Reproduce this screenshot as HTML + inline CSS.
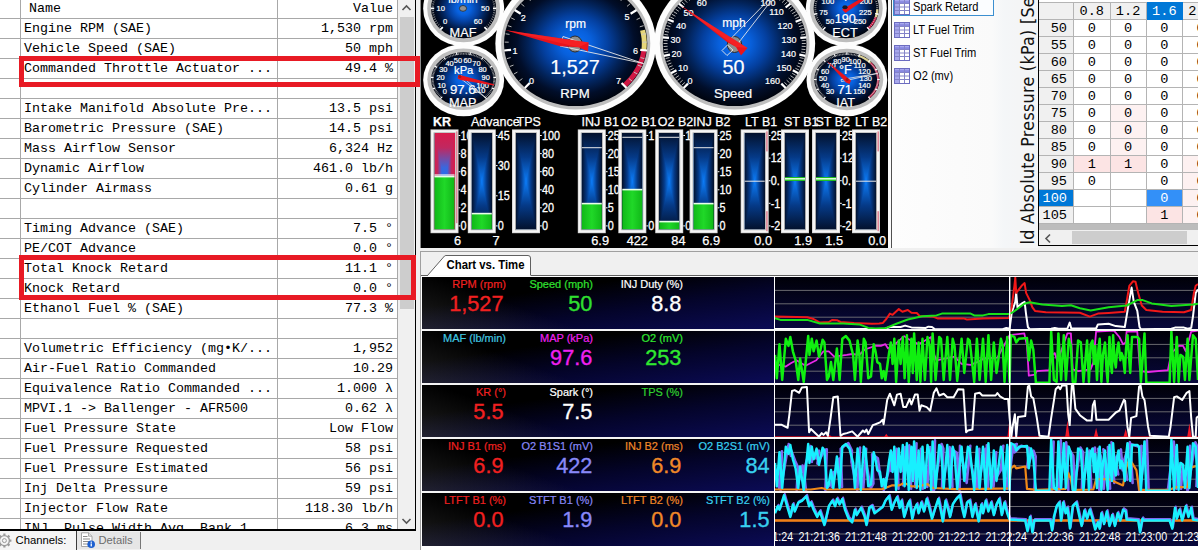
<!DOCTYPE html>
<html><head><meta charset="utf-8"><title>Scanner</title>
<style>
html,body{margin:0;padding:0}body{width:1198px;height:550px;overflow:hidden;position:relative;background:#f0f0f0}

#left{position:absolute;left:0;top:0;width:421px;height:550px;background:#f0f0f0}
.lt{position:absolute;left:0;top:0;width:415px;height:529px;background:#fff;border-right:1px solid #000;border-bottom:2px solid #000;overflow:hidden;font-family:"Liberation Mono",monospace;font-size:13.33px;color:#000}
.lr{position:absolute;left:0;width:397px;height:20px;line-height:20px;border-bottom:1px solid #a8a8a8;box-sizing:border-box;white-space:pre}
.lr .n{position:absolute;left:24px;top:0}
.lr .v{position:absolute;right:4px;top:0}
.vl{position:absolute;top:0;width:1px;height:529px;background:#a8a8a8}
.sb{position:absolute;left:398px;top:0;width:17px;height:529px;background:#f0f0f0}
.sb .th{position:absolute;left:2px;top:17px;width:14px;height:292px;background:#cdcdcd}
.sb .ar{position:absolute;left:0}
.red{position:absolute;box-sizing:border-box;border:5px solid #e81a24}
.btabs{position:absolute;left:0;top:531px;width:421px;height:19px;font-family:"Liberation Sans",sans-serif;line-height:19px}
.tabA{position:absolute;left:0;top:0;width:77px;height:19px;background:#f5f5f5;border-right:1.5px solid #3c3c3c;box-sizing:border-box}
.tabB{position:absolute;left:77px;top:1px;width:64px;height:17px;background:#e6e6e6;border-right:1px solid #777;box-sizing:border-box}
.bt1{position:absolute;left:15.5px;top:-0.5px;color:#000;font-size:11.3px}
.bt2{position:absolute;left:98.5px;top:-0.5px;color:#6d6d6d;font-size:11.2px}

#gp{position:absolute;left:421px;top:0;width:467px;height:248px;background:#000;overflow:hidden;box-shadow:-1px 0 0 #8c8c8c}
#gp svg{display:block}

#midw{position:absolute;left:888px;top:0;width:3px;height:248px;background:#fafafa}
#mid{position:absolute;left:890.5px;top:0;width:127.5px;height:248px;background:linear-gradient(90deg,#fdfdfd 0,#fafafa 100px,#f4f6f8 112px,#f4f5f6 100%);border-left:1.5px solid #505050;box-sizing:border-box;overflow:hidden;font-family:"Liberation Sans",sans-serif;font-size:12px;color:#000}
#mid .sel{position:absolute;left:1px;top:-10px;width:101px;height:26px;border:1px solid #3c8fd0;background:#fbfdff;box-sizing:border-box}
.mi{position:absolute;left:21.5px;height:20px;line-height:20px;white-space:nowrap;transform:scaleX(0.925);transform-origin:0 50%}
#vlab{position:absolute;left:1018px;top:0;width:20px;height:248px;background:#f4f5f6;overflow:hidden}
#vlab span{position:absolute;left:0;top:0;transform-origin:0 0;transform:translate(-0.5px,244.5px) rotate(-90deg);white-space:nowrap;font-family:"DejaVu Sans Condensed","DejaVu Sans",sans-serif;font-size:17.7px;line-height:20px;color:#111;letter-spacing:0.3px}

#rt{position:absolute;left:1038px;top:0;width:160px;height:245px;background:#fff;border-left:1px solid #000;border-bottom:1px solid #000;overflow:hidden;font-family:"Liberation Mono",monospace;font-size:13.6px;color:#000}
#rt div{box-sizing:border-box;position:absolute}
#rt .h{background:#f0f0f0;border-right:1px solid #b4b4b4;border-bottom:1px solid #b4b4b4;border-top:1px solid #b4b4b4;text-align:center}
#rt .h.sel{background:#0078d7;color:#fff;border-color:#0078d7}
#rt .rh{left:0;background:#f0f0f0;border-right:1px solid #b4b4b4;border-bottom:1px solid #b4b4b4;text-align:right;padding-right:6px}
#rt .rh.sel{background:#0078d7;color:#fff}
#rt .c{background:#fff;border-right:1px solid #b4b4b4;border-bottom:1px solid #b4b4b4;text-align:center}
#rt .c.p1{background:#fdf1f1}
#rt .c.p2{background:#fce4e4}
#rt .c.cs{background:#3390f8;color:#fff}
#rt .gs{left:0;top:224px;width:160px;height:6px;z-index:3;background:#bcbcbc}
#rt .hs{left:0;top:230px;width:160px;height:15px;background:#f0f0f0}
#rt .hs .th{left:33px;top:1px;width:115px;height:13px;background:#cdcdcd}

#cv{position:absolute;left:420px;top:250px;width:778px;height:300px;background:#f0f0f0}
#cv:before{content:"";position:absolute;left:0;top:1px;width:1px;height:299px;background:#a0a0a0}
#cv:after{content:"";position:absolute;left:1px;top:26px;width:777px;height:274px;background:#fff}
#ro .rb{position:absolute;left:0;width:352px;background:linear-gradient(20deg,rgba(70,70,70,.45) 0%,rgba(40,40,40,0) 32%),linear-gradient(172deg,#000 0%,#000 30%,#04042a 60%,#0b0b56 100%)}
#ro{position:absolute;left:2px;top:27px;width:352px;height:269px;background:#000;overflow:hidden;font-family:"Liberation Sans",sans-serif;z-index:2;border-left:0}
#ro .rl{position:absolute;font-size:11px;line-height:14px;white-space:nowrap;-webkit-text-stroke:0.2px}
#ro .rv{position:absolute;font-size:21.7px;line-height:28px;white-space:nowrap;-webkit-text-stroke:0.35px}
#ro .rs{position:absolute;left:0;width:352px;height:1.6px;margin-top:0.2px;background:#f4f4f4}
#ch{position:absolute;left:355px;top:27px;z-index:2}
</style></head>
<body>
<div id="left">
<div class="lt">
<div class="lr hd" style="top:0;height:19px;line-height:18px"><span class="n" style="padding-left:5px;top:0">Name</span><span class="v" style="top:0">Value</span></div>
<div class="lr" style="top:19px"><span class="n">Engine RPM (SAE)</span><span class="v">1,530 rpm</span></div>
<div class="lr" style="top:39px"><span class="n">Vehicle Speed (SAE)</span><span class="v">50 mph</span></div>
<div class="lr" style="top:59px"><span class="n">Commanded Throttle Actuator ...</span><span class="v">49.4 %</span></div>
<div class="lr" style="top:79px"><span class="n"></span><span class="v"></span></div>
<div class="lr" style="top:99px"><span class="n">Intake Manifold Absolute Pre...</span><span class="v">13.5 psi</span></div>
<div class="lr" style="top:119px"><span class="n">Barometric Pressure (SAE)</span><span class="v">14.5 psi</span></div>
<div class="lr" style="top:139px"><span class="n">Mass Airflow Sensor</span><span class="v">6,324 Hz</span></div>
<div class="lr" style="top:159px"><span class="n">Dynamic Airflow</span><span class="v">461.0 lb/h</span></div>
<div class="lr" style="top:179px"><span class="n">Cylinder Airmass</span><span class="v">0.61 g</span></div>
<div class="lr" style="top:199px"><span class="n"></span><span class="v"></span></div>
<div class="lr" style="top:219px"><span class="n">Timing Advance (SAE)</span><span class="v">7.5 °</span></div>
<div class="lr" style="top:239px"><span class="n">PE/COT Advance</span><span class="v">0.0 °</span></div>
<div class="lr" style="top:259px"><span class="n">Total Knock Retard</span><span class="v">11.1 °</span></div>
<div class="lr" style="top:279px"><span class="n">Knock Retard</span><span class="v">0.0 °</span></div>
<div class="lr" style="top:299px"><span class="n">Ethanol Fuel % (SAE)</span><span class="v">77.3 %</span></div>
<div class="lr" style="top:319px"><span class="n"></span><span class="v"></span></div>
<div class="lr" style="top:339px"><span class="n">Volumetric Efficiency (mg•K/...</span><span class="v">1,952</span></div>
<div class="lr" style="top:359px"><span class="n">Air-Fuel Ratio Commanded</span><span class="v">10.29</span></div>
<div class="lr" style="top:379px"><span class="n">Equivalence Ratio Commanded ...</span><span class="v">1.000 λ</span></div>
<div class="lr" style="top:399px"><span class="n">MPVI.1 -> Ballenger - AFR500</span><span class="v">0.62 λ</span></div>
<div class="lr" style="top:419px"><span class="n">Fuel Pressure State</span><span class="v">Low Flow</span></div>
<div class="lr" style="top:439px"><span class="n">Fuel Pressure Requested</span><span class="v">58 psi</span></div>
<div class="lr" style="top:459px"><span class="n">Fuel Pressure Estimated</span><span class="v">56 psi</span></div>
<div class="lr" style="top:479px"><span class="n">Inj Delta Pressure</span><span class="v">59 psi</span></div>
<div class="lr" style="top:499px"><span class="n">Injector Flow Rate</span><span class="v">118.30 lb/h</span></div>
<div class="lr" style="top:519px"><span class="n">INJ. Pulse Width Avg. Bank 1</span><span class="v">6.3 ms</span></div>
<div class="vl" style="left:20px"></div><div class="vl" style="left:277px"></div><div class="vl" style="left:397px"></div>
<div class="sb"><div class="th"></div><svg class="ar" style="top:3px" width="17" height="10" viewBox="0 0 17 10"><path d="M4.5 7 L8.5 3 L12.5 7" fill="none" stroke="#555" stroke-width="1.6"/></svg><svg class="ar" style="top:516px" width="17" height="10" viewBox="0 0 17 10"><path d="M4.5 3 L8.5 7 L12.5 3" fill="none" stroke="#555" stroke-width="1.6"/></svg></div>
</div>
<div class="red" style="left:19px;top:56px;width:401px;height:31px"></div>
<div class="red" style="left:19px;top:255px;width:397px;height:45px"></div>
<div class="btabs"><div class="tabA"></div><div class="tabB"></div><svg style="position:absolute;left:0;top:1px" width="14" height="18" viewBox="0 0 14 18"><g transform="translate(4.4,8.6)" fill="none" stroke="#9a9a9a"><circle r="5" stroke-width="1.3"/><circle r="2" stroke-width="1"/><path d="M0 -5V-7M0 5V7M5 0H7M-5 0H-7M3.5 -3.5L5 -5M3.5 3.5L5 5M-3.5 3.5L-5 5M-3.5 -3.5L-5 -5" stroke-width="2.2"/></g></svg><svg style="position:absolute;left:80px;top:1px" width="17" height="17" viewBox="0 0 17 17"><path d="M1.5 0.8H8.5L12 4.2V14.5H1.5Z" fill="#fff" stroke="#9c9c9c" stroke-width="0.9"/><path d="M8.5 0.8V4.2H12" fill="#e4e4e4" stroke="#9c9c9c" stroke-width="0.8"/><path d="M3 4.5H7.5M3 7H10M3 9.5H10M3 12H8" stroke="#8a8a8a" stroke-width="1"/><circle cx="11.2" cy="12.2" r="3.8" fill="#1c5fd0"/><rect x="10.6" y="11.4" width="1.3" height="3" fill="#fff"/><rect x="10.6" y="9.6" width="1.3" height="1.2" fill="#fff"/></svg><span class="bt1">Channels:</span><span class="bt2">Details</span></div>
</div>
<div id="gp"><svg width="468" height="248" viewBox="421 0 468 248">
<defs>
<radialGradient id="gf" cx="0.5" cy="0.5" r="0.5">
<stop offset="0" stop-color="#0a70f8"/><stop offset="0.22" stop-color="#0860dc"/><stop offset="0.45" stop-color="#0440a0"/><stop offset="0.65" stop-color="#02245c"/><stop offset="0.82" stop-color="#010e2a"/><stop offset="1" stop-color="#00040e"/>
</radialGradient>
</defs>
<ellipse cx="463.65" cy="8.6" rx="40.5" ry="37.9" fill="#fdfdfd"/>
<ellipse cx="463.6" cy="8.4" rx="36.4" ry="33.8" fill="#bebebe"/>
<ellipse cx="463.6" cy="8.4" rx="32.6" ry="29.8" fill="url(#gf)"/>
<path d="M441.0 29.0L442.5 27.6M439.3 27.3L440.9 26.0M437.8 25.5L439.4 24.3M436.4 23.6L438.1 22.6M435.2 21.6L437.0 20.7M434.1 19.5L436.0 18.8M433.3 17.4L435.2 16.8M432.6 15.2L434.5 14.7M432.1 13.0L434.1 12.6M431.8 10.7L433.8 10.5M431.7 8.4L433.7 8.4M431.8 6.1L433.8 6.3M432.1 3.8L434.1 4.2M432.6 1.6L434.5 2.1M433.3 -0.6L435.2 0.0M434.1 -2.7L436.0 -2.0M435.2 -4.8L437.0 -3.9M436.4 -6.8L438.1 -5.8M437.8 -8.7L439.4 -7.5M439.3 -10.5L440.9 -9.2M441.0 -12.2L442.5 -10.8M442.9 -13.7L444.2 -12.2M444.8 -15.1L446.0 -13.5M446.9 -16.4L448.0 -14.7M449.1 -17.5L450.0 -15.7M451.4 -18.5L452.2 -16.6M453.7 -19.3L454.4 -17.4M456.2 -19.9L456.6 -18.0M458.6 -20.3L458.9 -18.4M461.1 -20.6L461.3 -18.6M463.6 -20.7L463.6 -18.7M466.1 -20.6L465.9 -18.6M468.6 -20.3L468.3 -18.4M471.0 -19.9L470.6 -18.0M473.5 -19.3L472.8 -17.4M475.8 -18.5L475.0 -16.6M478.1 -17.5L477.2 -15.7M480.3 -16.4L479.2 -14.7M482.4 -15.1L481.2 -13.5M484.3 -13.7L483.0 -12.2M486.2 -12.2L484.7 -10.8M487.9 -10.5L486.3 -9.2M489.4 -8.7L487.8 -7.5M490.8 -6.8L489.1 -5.8M492.0 -4.8L490.2 -3.9M493.1 -2.7L491.2 -2.0M493.9 -0.6L492.0 0.0M494.6 1.6L492.7 2.1M495.1 3.8L493.1 4.2M495.4 6.1L493.4 6.3M495.5 8.4L493.5 8.4M495.4 10.7L493.4 10.5M495.1 13.0L493.1 12.6M494.6 15.2L492.7 14.7M493.9 17.4L492.0 16.8M493.1 19.5L491.2 18.8M492.0 21.6L490.2 20.7M490.8 23.6L489.1 22.6M489.4 25.5L487.8 24.3M487.9 27.3L486.3 26.0M486.2 29.0L484.7 27.6" stroke="#c8c8c8" stroke-width="0.7" fill="none"/>
<path d="M440.3 29.7L442.8 27.2M430.7 8.4L434.2 8.4M440.3 -12.9L442.8 -10.4M463.6 -21.7L463.6 -18.2M486.9 -12.9L484.4 -10.4M496.5 8.4L493.0 8.4M486.9 29.7L484.4 27.2" stroke="#fff" stroke-width="1.8" fill="none"/>
<g font-family="Liberation Sans, sans-serif" font-size="7.6" fill="#fff" stroke="#fff" stroke-width="0.2" text-anchor="middle">
<text x="445.0" y="23.6">0</text>
<text x="440.8" y="11.1">10</text>
<text x="485.2" y="11.1">50</text>
<text x="478.0" y="23.6">60</text>
</g>
<text x="463" y="3.2" font-family="Liberation Sans, sans-serif" font-size="11" fill="#fff" stroke="#fff" stroke-width="0.2" text-anchor="middle">lb/min</text>
<text x="463" y="36.8" font-family="Liberation Sans, sans-serif" font-size="12.7" fill="#fff" stroke="#fff" stroke-width="0.2" text-anchor="middle">MAF</text>
<ellipse cx="463" cy="8.4" rx="3.6" ry="2.9" fill="#909090" stroke="#202830" stroke-width="0.8"/>
<ellipse cx="463.65" cy="80.1" rx="40.5" ry="36.1" fill="#fdfdfd"/>
<ellipse cx="463.45" cy="79.3" rx="36.15" ry="30.8" fill="#bebebe"/>
<ellipse cx="463.45" cy="79.3" rx="32.35" ry="27.1" fill="url(#gf)"/>
<path d="M441.1 98.0L442.3 96.7M439.9 96.9L441.2 95.7M438.8 95.9L440.2 94.7M437.8 94.7L439.2 93.7M436.8 93.6L438.3 92.6M435.9 92.4L437.5 91.5M435.1 91.1L436.8 90.3M434.4 89.8L436.1 89.1M433.8 88.5L435.5 87.9M433.2 87.2L435.0 86.7M432.8 85.8L434.5 85.4M432.4 84.5L434.2 84.1M432.1 83.1L433.9 82.8M431.9 81.7L433.7 81.5M431.8 80.2L433.6 80.2M431.8 78.8L433.6 78.9M431.9 77.4L433.7 77.5M432.0 76.0L433.8 76.2M432.3 74.6L434.1 74.9M432.6 73.2L434.4 73.6M433.1 71.9L434.8 72.4M433.6 70.5L435.3 71.1M434.2 69.2L435.9 69.9M434.9 67.9L436.5 68.7M435.7 66.6L437.3 67.5M436.5 65.4L438.1 66.4M437.5 64.2L438.9 65.3M438.5 63.1L439.9 64.2M439.5 62.0L440.9 63.2M440.7 61.0L442.0 62.2M441.9 60.0L443.1 61.3M443.2 59.0L444.3 60.4M444.5 58.2L445.6 59.6M445.9 57.3L446.9 58.8M447.3 56.6L448.2 58.1M448.8 55.9L449.6 57.5M450.3 55.3L451.0 56.9M451.9 54.7L452.5 56.4M453.5 54.3L454.0 56.0M455.1 53.8L455.6 55.6M456.7 53.5L457.1 55.3M458.4 53.2L458.7 55.0M460.1 53.1L460.3 54.8M461.8 52.9L461.9 54.7M463.4 52.9L463.4 54.7M465.1 52.9L465.0 54.7M466.8 53.1L466.6 54.8M468.5 53.2L468.2 55.0M470.2 53.5L469.8 55.3M471.8 53.8L471.3 55.6M473.4 54.3L472.9 56.0M475.0 54.7L474.4 56.4M476.6 55.3L475.9 56.9M478.1 55.9L477.3 57.5M479.6 56.6L478.7 58.1M481.0 57.3L480.0 58.8M482.4 58.2L481.3 59.6M483.7 59.0L482.6 60.4M485.0 60.0L483.8 61.3M486.2 61.0L484.9 62.2M487.4 62.0L486.0 63.2M488.4 63.1L487.0 64.2M489.4 64.2L488.0 65.3M490.4 65.4L488.8 66.4M491.2 66.6L489.6 67.5M492.0 67.9L490.4 68.7M492.7 69.2L491.0 69.9M493.3 70.5L491.6 71.1M493.8 71.9L492.1 72.4M494.3 73.2L492.5 73.6M494.6 74.6L492.8 74.9M494.9 76.0L493.1 76.2M495.0 77.4L493.2 77.5M495.1 78.8L493.3 78.9M495.1 80.2L493.3 80.2M495.0 81.7L493.2 81.5M494.8 83.1L493.0 82.8M494.5 84.5L492.7 84.1M494.1 85.8L492.4 85.4M493.7 87.2L491.9 86.7M493.1 88.5L491.4 87.9M492.5 89.8L490.8 89.1M491.8 91.1L490.1 90.3M491.0 92.4L489.4 91.5M490.1 93.6L488.6 92.6M489.1 94.7L487.7 93.7M488.1 95.9L486.7 94.7M487.0 96.9L485.7 95.7M485.8 98.0L484.6 96.7" stroke="#c8c8c8" stroke-width="0.7" fill="none"/>
<path d="M440.4 98.7L442.1 96.9M432.9 88.9L435.2 88.0M430.9 77.3L433.4 77.5M434.8 66.2L437.0 67.4M443.9 57.4L445.4 59.4M456.5 52.5L457.0 55.0M470.4 52.5L469.9 55.0M483.0 57.4L481.5 59.4M492.1 66.2L489.9 67.4M496.0 77.3L493.5 77.5M494.0 88.9L491.7 88.0M486.5 98.7L484.8 96.9" stroke="#fff" stroke-width="1.2" fill="none"/>
<g font-family="Liberation Sans, sans-serif" font-size="7.4" fill="#fff" stroke="#fff" stroke-width="0.2" text-anchor="middle">
<text x="444.9" y="93.7">0</text>
<text x="441.5" y="88.1">10</text>
<text x="440.6" y="80.1">20</text>
<text x="443.3" y="72.1">30</text>
<text x="449.5" y="65.9">40</text>
<text x="457.9" y="63.0">50</text>
<text x="467.5" y="63.0">60</text>
<text x="476.4" y="65.9">70</text>
<text x="482.6" y="72.1">80</text>
<text x="485.7" y="80.1">90</text>
<text x="482.6" y="87.5">100</text>
<text x="479.5" y="93.1">110</text>
</g>
<text x="463.7" y="73.6" font-family="Liberation Sans, sans-serif" font-size="11.2" fill="#fff" stroke="#fff" stroke-width="0.2" text-anchor="middle">kPa</text>
<text x="462.8" y="94.1" font-family="Liberation Sans, sans-serif" font-size="13.2" fill="#fff" stroke="#fff" stroke-width="0.2" text-anchor="middle">97.6</text>
<text x="462.7" y="106.8" font-family="Liberation Sans, sans-serif" font-size="12.7" fill="#fff" stroke="#fff" stroke-width="0.2" text-anchor="middle">MAP</text>
<polygon points="461,75.5 486.6,98.6 460,78" fill="none" stroke="#e8e8e8" stroke-width="0.8"/><polygon points="458.3,75 461,75.2 494,84.2 494,85.5 460.5,80 457.6,78.6" fill="#e8141c"/><circle cx="459.8" cy="76.6" r="1.6" fill="#a01818"/>
<ellipse cx="575.65" cy="43.5" rx="80.3" ry="71.7" fill="#fdfdfd"/>
<ellipse cx="575.65" cy="43.5" rx="74.65" ry="65.9" fill="#bebebe"/>
<ellipse cx="575.65" cy="43.5" rx="71.65" ry="62.6" fill="url(#gf)"/>
<polygon fill="#e6d67a" points="645.0,29.7 646.0,34.0 646.5,38.3 646.8,42.6 646.7,47.0 646.2,51.3 641.3,50.7 641.7,46.7 641.8,42.7 641.6,38.7 641.0,34.7 640.1,30.8"/>
<polygon fill="#d01844" points="646.2,51.3 645.4,55.8 644.2,60.2 642.6,64.5 640.6,68.8 638.4,72.8 635.7,76.8 632.8,80.5 629.5,84.1 626.0,87.4 622.4,83.9 625.7,80.8 628.8,77.5 631.5,74.1 633.9,70.5 636.1,66.7 637.9,62.8 639.4,58.9 640.5,54.8 641.3,50.7"/>
<path d="M525.5 87.3L528.3 84.4M519.2 81.0L522.4 78.6M513.9 74.0L517.4 72.1M509.8 66.5L513.5 65.1M506.9 58.6L510.7 57.6M505.1 50.4L509.1 50.0M504.7 42.1L508.7 42.2M505.6 33.8L509.5 34.4M507.7 25.7L511.5 26.8M511.1 17.9L514.7 19.6M515.6 10.6L519.0 12.7M521.2 3.8L524.3 6.4M527.8 -2.2L530.5 0.8M535.2 -7.4L537.5 -4.1M543.4 -11.7L545.3 -8.1M552.2 -14.9L553.5 -11.2M561.4 -17.1L562.2 -13.2M570.9 -18.3L571.1 -14.3M580.4 -18.3L580.2 -14.3M589.9 -17.1L589.1 -13.2M599.1 -14.9L597.8 -11.2M607.9 -11.7L606.0 -8.1M616.1 -7.4L613.8 -4.1M623.5 -2.2L620.8 0.8M630.1 3.8L627.0 6.4M635.7 10.6L632.3 12.7M640.2 17.9L636.6 19.6M643.6 25.7L639.8 26.8M645.7 33.8L641.8 34.4M646.6 42.1L642.6 42.2M646.2 50.4L642.2 50.0M644.4 58.6L640.6 57.6M641.5 66.5L637.8 65.1M637.4 74.0L633.9 72.1M632.1 81.0L628.9 78.6M625.8 87.3L623.0 84.4" stroke="#c8c8c8" stroke-width="0.9" fill="none"/>
<path d="M524.8 88.0L529.7 83.0M504.2 50.5L511.1 49.8M514.7 10.0L520.7 13.8M551.9 -15.9L554.2 -9.3M599.4 -15.9L597.1 -9.3M636.6 10.0L630.6 13.8M647.1 50.5L640.2 49.8M626.5 88.0L621.6 83.0" stroke="#fff" stroke-width="2.2" fill="none"/>
<g font-family="Liberation Sans, sans-serif" font-size="9" fill="#fff" stroke="#fff" stroke-width="0.2" text-anchor="middle">
<text x="531.5" y="84.0">0</text>
<text x="515.1" y="53.9">1</text>
<text x="523.2" y="20.7">2</text>
<text x="555.5" y="-1.9">3</text>
<text x="595.8" y="-1.9">4</text>
<text x="627.1" y="20.4">5</text>
<text x="635.6" y="53.9">6</text>
<text x="618.4" y="84.0">7</text>
</g>
<text x="575.6" y="28.0" font-family="Liberation Sans, sans-serif" font-size="12" fill="#fff" stroke="#fff" stroke-width="0.2" text-anchor="middle">rpm</text>
<text x="575" y="73.9" font-family="Liberation Sans, sans-serif" font-size="19.8" fill="#fff" stroke="#fff" stroke-width="0.2" text-anchor="middle">1,527</text>
<text x="575" y="98.4" font-family="Liberation Sans, sans-serif" font-size="13.2" fill="#fff" stroke="#fff" stroke-width="0.2" text-anchor="middle">RPM</text>
<ellipse cx="575" cy="44" rx="7.2" ry="8" fill="#8e8e8e" stroke="#2a2a2a" stroke-width="1"/><polygon points="563,36.5 643.5,63.5 560,46" fill="none" stroke="#e8e8e8" stroke-width="0.9"/><polygon points="505.5,30.2 588.7,42.6 588,51.6 578.5,47.3 560,46.2" fill="#e8141c"/><polygon points="505.5,30.2 588.7,42.6 578.5,47.3" fill="#ff2a2a" opacity="0.55"/>
<ellipse cx="734.65" cy="43.5" rx="80.5" ry="71.7" fill="#fdfdfd"/>
<ellipse cx="734.65" cy="43.5" rx="74.85" ry="65.9" fill="#bebebe"/>
<ellipse cx="734.65" cy="43.5" rx="71.85" ry="62.6" fill="url(#gf)"/>
<path d="M684.3 87.3L687.2 84.4M681.9 85.1L684.9 82.4M679.7 82.8L682.7 80.2M677.5 80.4L680.7 78.0M675.5 77.9L678.8 75.7M673.6 75.3L677.1 73.3M671.9 72.7L675.4 70.8M670.3 70.0L673.9 68.3M668.9 67.2L672.6 65.7M667.7 64.4L671.4 63.0M666.6 61.5L670.4 60.3M665.6 58.5L669.5 57.6M664.9 55.6L668.8 54.8M664.3 52.6L668.2 52.0M663.8 49.6L667.8 49.2M663.6 46.5L667.6 46.3M663.5 43.5L667.5 43.5M663.6 40.5L667.6 40.7M663.8 37.4L667.8 37.8M664.3 34.4L668.2 35.0M664.9 31.4L668.8 32.2M665.6 28.5L669.5 29.4M666.6 25.5L670.4 26.7M667.7 22.6L671.4 24.0M668.9 19.8L672.6 21.3M670.3 17.0L673.9 18.7M671.9 14.3L675.4 16.2M673.6 11.7L677.1 13.7M675.5 9.1L678.8 11.3M677.5 6.6L680.7 9.0M679.7 4.2L682.7 6.8M681.9 1.9L684.9 4.6M684.3 -0.3L687.2 2.6M686.9 -2.4L689.6 0.6M689.5 -4.3L692.1 -1.3M692.3 -6.2L694.6 -3.0M695.1 -8.0L697.3 -4.6M698.1 -9.6L700.1 -6.2M701.1 -11.1L703.0 -7.6M704.2 -12.5L705.9 -8.8M707.4 -13.7L709.0 -10.0M710.7 -14.8L712.0 -11.0M714.0 -15.7L715.2 -11.9M717.4 -16.5L718.3 -12.7M720.8 -17.2L721.5 -13.3M724.2 -17.7L724.8 -13.8M727.7 -18.1L728.1 -14.1M731.2 -18.3L731.4 -14.3M734.6 -18.4L734.6 -14.4M738.1 -18.3L737.9 -14.3M741.6 -18.1L741.2 -14.1M745.1 -17.7L744.5 -13.8M748.5 -17.2L747.8 -13.3M751.9 -16.5L751.0 -12.7M755.3 -15.7L754.1 -11.9M758.6 -14.8L757.3 -11.0M761.9 -13.7L760.3 -10.0M765.1 -12.5L763.4 -8.8M768.2 -11.1L766.3 -7.6M771.2 -9.6L769.2 -6.2M774.2 -8.0L772.0 -4.6M777.0 -6.2L774.7 -3.0M779.8 -4.3L777.2 -1.3M782.4 -2.4L779.7 0.6M785.0 -0.3L782.1 2.6M787.4 1.9L784.4 4.6M789.6 4.2L786.6 6.8M791.8 6.6L788.6 9.0M793.8 9.1L790.5 11.3M795.7 11.7L792.2 13.7M797.4 14.3L793.9 16.2M799.0 17.0L795.4 18.7M800.4 19.8L796.7 21.3M801.6 22.6L797.9 24.0M802.7 25.5L798.9 26.7M803.7 28.5L799.8 29.4M804.4 31.4L800.5 32.2M805.0 34.4L801.1 35.0M805.5 37.4L801.5 37.8M805.7 40.5L801.7 40.7M805.8 43.5L801.8 43.5M805.7 46.5L801.7 46.3M805.5 49.6L801.5 49.2M805.0 52.6L801.1 52.0M804.4 55.6L800.5 54.8M803.7 58.5L799.8 57.6M802.7 61.5L798.9 60.3M801.6 64.4L797.9 63.0M800.4 67.2L796.7 65.7M799.0 70.0L795.4 68.3M797.4 72.7L793.9 70.8M795.7 75.3L792.2 73.3M793.8 77.9L790.5 75.7M791.8 80.4L788.6 78.0M789.6 82.8L786.6 80.2M787.4 85.1L784.4 82.4M785.0 87.3L782.1 84.4" stroke="#c8c8c8" stroke-width="0.9" fill="none"/>
<path d="M683.6 88.0L688.0 83.6M671.0 73.2L676.5 70.2M663.9 55.8L670.0 54.6M662.8 37.3L669.0 37.9M668.0 19.4L673.7 21.8M678.9 3.6L683.7 7.5M694.6 -8.8L698.0 -3.6M713.7 -16.7L715.5 -10.8M734.6 -19.4L734.6 -13.2M755.6 -16.7L753.8 -10.8M774.7 -8.8L771.3 -3.6M790.4 3.6L785.6 7.5M801.3 19.4L795.6 21.8M806.5 37.3L800.3 37.9M805.4 55.8L799.3 54.6M798.3 73.2L792.8 70.2M785.7 88.0L781.3 83.6" stroke="#fff" stroke-width="2.2" fill="none"/>
<g font-family="Liberation Sans, sans-serif" font-size="9" fill="#fff" stroke="#fff" stroke-width="0.2" text-anchor="middle">
<text x="690.0" y="84.0">0</text>
<text x="683.0" y="71.2">10</text>
<text x="676.5" y="57.2">20</text>
<text x="675.6" y="43.2">30</text>
<text x="681.0" y="28.7">40</text>
<text x="688.5" y="16.2">50</text>
<text x="701.8" y="5.8">60</text>
<text x="717.2" y="-2.1">70</text>
<text x="734.6" y="-4.3">80</text>
<text x="752.1" y="-2.1">90</text>
<text x="768.0" y="5.8">100</text>
<text x="776.5" y="15.2">110</text>
<text x="785.0" y="28.7">120</text>
<text x="789.0" y="43.2">130</text>
<text x="788.5" y="57.2">140</text>
<text x="784.0" y="71.2">150</text>
<text x="772.5" y="84.0">160</text>
</g>
<text x="734" y="27.3" font-family="Liberation Sans, sans-serif" font-size="12" fill="#fff" stroke="#fff" stroke-width="0.2" text-anchor="middle">mph</text>
<text x="733.5" y="73.9" font-family="Liberation Sans, sans-serif" font-size="19.8" fill="#fff" stroke="#fff" stroke-width="0.2" text-anchor="middle">50</text>
<text x="733" y="98.4" font-family="Liberation Sans, sans-serif" font-size="13.2" fill="#fff" stroke="#fff" stroke-width="0.2" text-anchor="middle">Speed</text>
<ellipse cx="734.5" cy="44.5" rx="7.2" ry="8" fill="#8e8e8e" stroke="#2a2a2a" stroke-width="1"/><polygon points="729,40.5 768,0.5 771,1 736,46" fill="none" stroke="#e8e8e8" stroke-width="0.9"/><polygon points="722,50.5 727.5,45 733,50 727,55.5" fill="none" stroke="#e8e8e8" stroke-width="0.9"/><polygon points="680.5,5.6 747.5,48 741,55.5 736,47 727,42" fill="#e8141c"/><polygon points="680.5,5.6 747.5,48 736,47" fill="#ff2a2a" opacity="0.55"/>
<ellipse cx="846.3" cy="8.6" rx="40.5" ry="37.9" fill="#fdfdfd"/>
<ellipse cx="846.25" cy="8.4" rx="36.449999999999996" ry="33.8" fill="#bebebe"/>
<ellipse cx="846.25" cy="8.4" rx="32.65" ry="29.8" fill="url(#gf)"/>
<polygon fill="#e6d67a" points="878.4,9.3 878.2,11.4 877.9,13.4 877.5,15.5 876.8,17.5 874.7,16.8 875.3,14.9 875.8,13.1 876.0,11.2 876.2,9.3"/>
<polygon fill="#d01844" points="876.8,17.5 876.1,19.3 875.2,21.1 874.2,22.9 873.1,24.5 871.8,26.1 870.5,27.7 869.0,29.1 867.4,27.6 868.8,26.2 870.1,24.8 871.2,23.3 872.3,21.8 873.2,20.2 874.0,18.5 874.7,16.8"/>
<path d="M823.7 29.0L825.1 27.6M822.1 27.4L823.6 26.1M820.6 25.7L822.2 24.5M819.3 24.0L820.9 22.9M818.1 22.1L819.8 21.2M817.0 20.2L818.9 19.4M816.2 18.2L818.1 17.5M815.5 16.2L817.4 15.6M814.9 14.1L816.9 13.7M814.5 12.0L816.5 11.7M814.3 9.8L816.3 9.7M814.3 7.7L816.3 7.7M814.5 5.5L816.4 5.7M814.8 3.4L816.7 3.8M815.3 1.3L817.2 1.8M815.9 -0.7L817.8 -0.1M816.7 -2.7L818.6 -2.0M817.7 -4.7L819.5 -3.8M818.8 -6.6L820.6 -5.5M820.1 -8.4L821.8 -7.2M821.6 -10.1L823.1 -8.8M823.1 -11.7L824.6 -10.3M824.8 -13.2L826.1 -11.7M826.6 -14.5L827.8 -13.0M828.5 -15.8L829.6 -14.1M830.5 -16.9L831.5 -15.2M832.6 -17.9L833.4 -16.1M834.8 -18.8L835.5 -16.9M837.0 -19.4L837.6 -17.5M839.2 -20.0L839.7 -18.0M841.6 -20.4L841.9 -18.4M843.9 -20.6L844.0 -18.6M846.2 -20.7L846.2 -18.7M848.6 -20.6L848.5 -18.6M850.9 -20.4L850.6 -18.4M853.3 -20.0L852.8 -18.0M855.5 -19.4L854.9 -17.5M857.7 -18.8L857.0 -16.9M859.9 -17.9L859.1 -16.1M862.0 -16.9L861.0 -15.2M864.0 -15.8L862.9 -14.1M865.9 -14.5L864.7 -13.0M867.7 -13.2L866.4 -11.7M869.4 -11.7L867.9 -10.3M870.9 -10.1L869.4 -8.8M872.4 -8.4L870.7 -7.2M873.7 -6.6L871.9 -5.5M874.8 -4.7L873.0 -3.8M875.8 -2.7L873.9 -2.0M876.6 -0.7L874.7 -0.1M877.2 1.3L875.3 1.8M877.7 3.4L875.8 3.8M878.0 5.5L876.1 5.7M878.2 7.7L876.2 7.7M878.2 9.8L876.2 9.7M878.0 12.0L876.0 11.7M877.6 14.1L875.6 13.7M877.0 16.2L875.1 15.6M876.3 18.2L874.4 17.5M875.5 20.2L873.6 19.4M874.4 22.1L872.7 21.2M873.2 24.0L871.6 22.9M871.9 25.7L870.3 24.5M870.4 27.4L868.9 26.1M868.8 29.0L867.4 27.6" stroke="#c8c8c8" stroke-width="0.7" fill="none"/>
<path d="M823.0 29.7L825.4 27.2M813.9 14.3L817.4 13.6M815.8 -3.1L819.0 -1.8M827.9 -16.6L829.9 -13.7M846.2 -21.7L846.2 -18.2M864.6 -16.6L862.6 -13.7M876.7 -3.1L873.5 -1.8M878.6 14.3L875.1 13.6M869.5 29.7L867.1 27.2" stroke="#fff" stroke-width="1.4" fill="none"/>
<g font-family="Liberation Sans, sans-serif" font-size="7.6" fill="#fff" stroke="#fff" stroke-width="0.2" text-anchor="middle">
<text x="830.0" y="23.6">50</text>
<text x="823.4" y="15.2">75</text>
<text x="827.8" y="4.4">100</text>
<text x="866.0" y="4.4">200</text>
<text x="865.3" y="15.2">225</text>
<text x="860.0" y="23.6">250</text>
</g>
<text x="845.5" y="1.0" font-family="Liberation Sans, sans-serif" font-size="11" fill="#fff" stroke="#fff" stroke-width="0.2" text-anchor="middle">°F</text>
<text x="845.2" y="23.4" font-family="Liberation Sans, sans-serif" font-size="12.6" fill="#fff" stroke="#fff" stroke-width="0.2" text-anchor="middle">190</text>
<text x="845" y="36.8" font-family="Liberation Sans, sans-serif" font-size="12.7" fill="#fff" stroke="#fff" stroke-width="0.2" text-anchor="middle">ECT</text>
<polygon points="842,9.5 861,-1.5 864.5,-0.5 845.5,13" fill="#e8141c"/><ellipse cx="845" cy="7.2" rx="2.6" ry="2" fill="#181c28"/>
<ellipse cx="846.9" cy="80.1" rx="40.4" ry="36.1" fill="#fdfdfd"/>
<ellipse cx="846.9" cy="79.5" rx="36.4" ry="30.7" fill="#bebebe"/>
<ellipse cx="846.9" cy="79.5" rx="32.6" ry="27" fill="url(#gf)"/>
<polygon fill="#e6d67a" points="859.2,55.0 861.2,55.8 863.1,56.6 864.9,57.5 866.6,58.6 868.3,59.7 869.9,61.0 871.3,62.3 869.8,63.6 868.4,62.4 867.0,61.2 865.4,60.2 863.8,59.2 862.0,58.3 860.3,57.5 858.4,56.9"/>
<polygon fill="#d01844" points="871.3,62.3 872.8,63.8 874.1,65.5 875.3,67.2 876.4,69.0 877.2,70.8 877.9,72.7 878.5,74.6 878.8,76.6 879.0,78.6 879.0,80.5 878.8,82.5 878.4,84.5 877.9,86.4 877.2,88.3 876.3,90.1 875.3,91.9 874.1,93.6 872.7,95.2 871.2,96.8 869.6,98.2 868.2,96.8 869.7,95.5 871.1,94.1 872.4,92.5 873.5,91.0 874.5,89.3 875.3,87.6 876.0,85.9 876.5,84.1 876.8,82.3 877.0,80.5 877.0,78.6 876.8,76.8 876.5,75.0 876.0,73.2 875.3,71.5 874.5,69.8 873.6,68.1 872.4,66.5 871.2,65.0 869.8,63.6"/>
<path d="M824.3 98.1L825.6 96.8M823.3 97.2L824.6 96.0M822.2 96.2L823.6 95.0M821.3 95.2L822.7 94.1M820.4 94.1L821.9 93.1M819.5 93.0L821.1 92.1M818.8 91.9L820.4 91.0M818.1 90.7L819.7 90.0M817.4 89.6L819.1 88.9M816.9 88.4L818.6 87.8M816.4 87.1L818.1 86.6M816.0 85.9L817.7 85.5M815.6 84.6L817.4 84.3M815.3 83.4L817.1 83.1M815.2 82.1L816.9 81.9M815.0 80.8L816.8 80.7M815.0 79.5L816.8 79.5M815.0 78.2L816.8 78.3M815.2 76.9L816.9 77.1M815.3 75.6L817.1 75.9M815.6 74.4L817.4 74.7M816.0 73.1L817.7 73.5M816.4 71.9L818.1 72.4M816.9 70.6L818.6 71.2M817.4 69.4L819.1 70.1M818.1 68.3L819.7 69.0M818.8 67.1L820.4 68.0M819.5 66.0L821.1 66.9M820.4 64.9L821.9 65.9M821.3 63.8L822.7 64.9M822.2 62.8L823.6 64.0M823.3 61.8L824.6 63.0M824.3 60.9L825.6 62.2M825.5 60.0L826.7 61.3M826.7 59.2L827.8 60.6M827.9 58.4L829.0 59.8M829.2 57.6L830.2 59.1M830.5 56.9L831.4 58.5M831.9 56.3L832.7 57.9M833.3 55.7L834.0 57.4M834.7 55.2L835.4 56.9M836.2 54.7L836.8 56.4M837.6 54.3L838.2 56.1M839.1 54.0L839.6 55.7M840.7 53.7L841.0 55.5M842.2 53.5L842.5 55.3M843.8 53.3L843.9 55.1M845.3 53.2L845.4 55.0M846.9 53.2L846.9 55.0M848.5 53.2L848.4 55.0M850.0 53.3L849.9 55.1M851.6 53.5L851.3 55.3M853.1 53.7L852.8 55.5M854.7 54.0L854.2 55.7M856.2 54.3L855.6 56.1M857.6 54.7L857.0 56.4M859.1 55.2L858.4 56.9M860.5 55.7L859.8 57.4M861.9 56.3L861.1 57.9M863.3 56.9L862.4 58.5M864.6 57.6L863.6 59.1M865.9 58.4L864.8 59.8M867.1 59.2L866.0 60.6M868.3 60.0L867.1 61.3M869.5 60.9L868.2 62.2M870.5 61.8L869.2 63.0M871.6 62.8L870.2 64.0M872.5 63.8L871.1 64.9M873.4 64.9L871.9 65.9M874.3 66.0L872.7 66.9M875.0 67.1L873.4 68.0M875.7 68.3L874.1 69.0M876.4 69.4L874.7 70.1M876.9 70.6L875.2 71.2M877.4 71.9L875.7 72.4M877.8 73.1L876.1 73.5M878.2 74.4L876.4 74.7M878.5 75.6L876.7 75.9M878.6 76.9L876.9 77.1M878.8 78.2L877.0 78.3M878.8 79.5L877.0 79.5M878.8 80.8L877.0 80.7M878.6 82.1L876.9 81.9M878.5 83.4L876.7 83.1M878.2 84.6L876.4 84.3M877.8 85.9L876.1 85.5M877.4 87.1L875.7 86.6M876.9 88.4L875.2 87.8M876.4 89.6L874.7 88.9M875.7 90.7L874.1 90.0M875.0 91.9L873.4 91.0M874.3 93.0L872.7 92.1M873.4 94.1L871.9 93.1M872.5 95.2L871.1 94.1M871.6 96.2L870.2 95.0M870.5 97.2L869.2 96.0M869.5 98.1L868.2 96.8" stroke="#c8c8c8" stroke-width="0.7" fill="none"/>
<path d="M823.6 98.8L825.4 97.0M816.5 89.9L818.8 89.0M814.0 79.5L816.5 79.5M816.5 69.1L818.8 70.0M823.6 60.2L825.4 62.0M834.3 54.3L835.3 56.6M846.9 52.2L846.9 54.7M859.5 54.3L858.5 56.6M870.2 60.2L868.4 62.0M877.3 69.1L875.0 70.0M879.8 79.5L877.3 79.5M877.3 89.9L875.0 89.0M870.2 98.8L868.4 97.0" stroke="#fff" stroke-width="1.2" fill="none"/>
<g font-family="Liberation Sans, sans-serif" font-size="7.4" fill="#fff" stroke="#fff" stroke-width="0.2" text-anchor="middle">
<text x="830.0" y="94.0">30</text>
<text x="825.0" y="87.7">40</text>
<text x="823.0" y="80.7">50</text>
<text x="825.0" y="73.7">60</text>
<text x="831.4" y="67.7">70</text>
<text x="837.3" y="63.5">80</text>
<text x="845.7" y="62.2">90</text>
<text x="854.9" y="63.5">100</text>
<text x="859.7" y="67.7">110</text>
<text x="864.4" y="73.7">120</text>
<text x="865.7" y="80.7">130</text>
<text x="864.4" y="87.7">140</text>
<text x="859.3" y="94.0">150</text>
</g>
<text x="845.3" y="74.1" font-family="Liberation Sans, sans-serif" font-size="12.5" fill="#fff" stroke="#fff" stroke-width="0.2" text-anchor="middle">°F</text>
<text x="844.7" y="94.0" font-family="Liberation Sans, sans-serif" font-size="13" fill="#fff" stroke="#fff" stroke-width="0.2" text-anchor="middle">71</text>
<text x="845.7" y="106.6" font-family="Liberation Sans, sans-serif" font-size="12.7" fill="#fff" stroke="#fff" stroke-width="0.2" text-anchor="middle">IAT</text>
<polygon points="841,79.6 877.8,73.3 841.5,81.6" fill="none" stroke="#e8e8e8" stroke-width="0.8"/><polygon points="826.5,60.8 851,80.5 849.5,84 846,82.5" fill="#e8141c"/><circle cx="847.2" cy="79.5" r="1.5" fill="#a01818"/>
<defs>
<linearGradient id="bv" x1="0" y1="0" x2="0" y2="1"><stop offset="0" stop-color="#020c24"/><stop offset="0.5" stop-color="#0a6ae8"/><stop offset="1" stop-color="#020c24"/></linearGradient>
<linearGradient id="bh" x1="0" y1="0" x2="1" y2="0"><stop offset="0" stop-color="#001030" stop-opacity="0.85"/><stop offset="0.5" stop-color="#001030" stop-opacity="0"/><stop offset="1" stop-color="#001030" stop-opacity="0.85"/></linearGradient>
<linearGradient id="bT" x1="0" y1="0" x2="0" y2="1"><stop offset="0" stop-color="#03122e"/><stop offset="0.5" stop-color="#053a88"/><stop offset="1" stop-color="#0c7cf8"/></linearGradient>
<linearGradient id="bB" x1="0" y1="0" x2="0" y2="1"><stop offset="0" stop-color="#0c7cf8"/><stop offset="0.5" stop-color="#053a88"/><stop offset="1" stop-color="#03122e"/></linearGradient>
<linearGradient id="bL" x1="0" y1="0" x2="1" y2="0"><stop offset="0" stop-color="#03122e"/><stop offset="0.5" stop-color="#053a88"/><stop offset="1" stop-color="#0c7cf8"/></linearGradient>
<linearGradient id="bR" x1="0" y1="0" x2="1" y2="0"><stop offset="0" stop-color="#0c7cf8"/><stop offset="0.5" stop-color="#053a88"/><stop offset="1" stop-color="#03122e"/></linearGradient>
<linearGradient id="kT" x1="0" y1="0" x2="0" y2="1"><stop offset="0" stop-color="#d81c4c"/><stop offset="0.3" stop-color="#c02860"/><stop offset="0.72" stop-color="#3868e0"/><stop offset="1" stop-color="#2070f0"/></linearGradient>
<linearGradient id="kB" x1="0" y1="0" x2="0" y2="1"><stop offset="0" stop-color="#2070f0"/><stop offset="0.28" stop-color="#3868e0"/><stop offset="0.7" stop-color="#c02860"/><stop offset="1" stop-color="#d81c4c"/></linearGradient>
<linearGradient id="kL" x1="0" y1="0" x2="1" y2="0"><stop offset="0" stop-color="#d81c4c"/><stop offset="0.3" stop-color="#c02860"/><stop offset="0.72" stop-color="#3868e0"/><stop offset="1" stop-color="#2070f0"/></linearGradient>
<linearGradient id="kR" x1="0" y1="0" x2="1" y2="0"><stop offset="0" stop-color="#2070f0"/><stop offset="0.28" stop-color="#3868e0"/><stop offset="0.7" stop-color="#c02860"/><stop offset="1" stop-color="#d81c4c"/></linearGradient>
<linearGradient id="gr" x1="0" y1="0" x2="1" y2="0"><stop offset="0" stop-color="#10b818"/><stop offset="0.5" stop-color="#20d828"/><stop offset="1" stop-color="#10b818"/></linearGradient>
<linearGradient id="krg" x1="0" y1="0" x2="0" y2="1"><stop offset="0" stop-color="#d81c50"/><stop offset="0.45" stop-color="#b03070"/><stop offset="1" stop-color="#3060d8"/></linearGradient>
</defs>
<g font-family="Liberation Sans, sans-serif" font-size="12" fill="#fff" stroke="#fff" stroke-width="0.3">
<text transform="translate(460.5,139.8) scale(0.9,1)">10</text>
<rect x="458.5" y="135.0" width="1.8" height="1" fill="#fff" stroke="none"/>
<text transform="translate(460.5,157.9) scale(0.9,1)">8</text>
<rect x="458.5" y="153.1" width="1.8" height="1" fill="#fff" stroke="none"/>
<text transform="translate(460.5,176.0) scale(0.9,1)">6</text>
<rect x="458.5" y="171.2" width="1.8" height="1" fill="#fff" stroke="none"/>
<text transform="translate(460.5,194.10000000000002) scale(0.9,1)">4</text>
<rect x="458.5" y="189.3" width="1.8" height="1" fill="#fff" stroke="none"/>
<text transform="translate(460.5,212.10000000000002) scale(0.9,1)">2</text>
<rect x="458.5" y="207.3" width="1.8" height="1" fill="#fff" stroke="none"/>
<text transform="translate(460.5,230.20000000000002) scale(0.9,1)">0</text>
<rect x="458.5" y="225.4" width="1.8" height="1" fill="#fff" stroke="none"/>
</g>
<g font-family="Liberation Sans, sans-serif" font-size="12" fill="#fff" stroke="#fff" stroke-width="0.3">
<text transform="translate(497.8,139.8) scale(0.9,1)">45</text>
<rect x="495.8" y="135.0" width="1.8" height="1" fill="#fff" stroke="none"/>
<text transform="translate(497.8,169.9) scale(0.9,1)">30</text>
<rect x="495.8" y="165.1" width="1.8" height="1" fill="#fff" stroke="none"/>
<text transform="translate(497.8,200.10000000000002) scale(0.9,1)">15</text>
<rect x="495.8" y="195.3" width="1.8" height="1" fill="#fff" stroke="none"/>
<text transform="translate(497.8,230.20000000000002) scale(0.9,1)">0</text>
<rect x="495.8" y="225.4" width="1.8" height="1" fill="#fff" stroke="none"/>
</g>
<g font-family="Liberation Sans, sans-serif" font-size="12" fill="#fff" stroke="#fff" stroke-width="0.3">
<text transform="translate(542,139.8) scale(0.9,1)">100</text>
<rect x="540" y="135.0" width="1.8" height="1" fill="#fff" stroke="none"/>
<text transform="translate(542,157.9) scale(0.9,1)">80</text>
<rect x="540" y="153.1" width="1.8" height="1" fill="#fff" stroke="none"/>
<text transform="translate(542,176.0) scale(0.9,1)">60</text>
<rect x="540" y="171.2" width="1.8" height="1" fill="#fff" stroke="none"/>
<text transform="translate(542,194.10000000000002) scale(0.9,1)">40</text>
<rect x="540" y="189.3" width="1.8" height="1" fill="#fff" stroke="none"/>
<text transform="translate(542,212.10000000000002) scale(0.9,1)">20</text>
<rect x="540" y="207.3" width="1.8" height="1" fill="#fff" stroke="none"/>
<text transform="translate(542,230.20000000000002) scale(0.9,1)">0</text>
<rect x="540" y="225.4" width="1.8" height="1" fill="#fff" stroke="none"/>
</g>
<g font-family="Liberation Sans, sans-serif" font-size="12" fill="#fff" stroke="#fff" stroke-width="0.3">
<text transform="translate(607.8,139.8) scale(0.9,1)">25</text>
<rect x="605.8" y="135.0" width="1.8" height="1" fill="#fff" stroke="none"/>
<text transform="translate(607.8,157.9) scale(0.9,1)">20</text>
<rect x="605.8" y="153.1" width="1.8" height="1" fill="#fff" stroke="none"/>
<text transform="translate(607.8,176.0) scale(0.9,1)">15</text>
<rect x="605.8" y="171.2" width="1.8" height="1" fill="#fff" stroke="none"/>
<text transform="translate(607.8,194.10000000000002) scale(0.9,1)">10</text>
<rect x="605.8" y="189.3" width="1.8" height="1" fill="#fff" stroke="none"/>
<text transform="translate(607.8,212.10000000000002) scale(0.9,1)">5</text>
<rect x="605.8" y="207.3" width="1.8" height="1" fill="#fff" stroke="none"/>
<text transform="translate(607.8,230.20000000000002) scale(0.9,1)">0</text>
<rect x="605.8" y="225.4" width="1.8" height="1" fill="#fff" stroke="none"/>
</g>
<g font-family="Liberation Sans, sans-serif" font-size="12" fill="#fff" stroke="#fff" stroke-width="0.3">
<text transform="translate(648.3,139.8) scale(0.9,1)">1</text>
<rect x="646.3" y="135.0" width="1.8" height="1" fill="#fff" stroke="none"/>
<text transform="translate(648.3,230.20000000000002) scale(0.9,1)">0</text>
<rect x="646.3" y="225.4" width="1.8" height="1" fill="#fff" stroke="none"/>
</g>
<g font-family="Liberation Sans, sans-serif" font-size="12" fill="#fff" stroke="#fff" stroke-width="0.3">
<text transform="translate(685.2,139.8) scale(0.9,1)">1</text>
<rect x="683.2" y="135.0" width="1.8" height="1" fill="#fff" stroke="none"/>
<text transform="translate(685.2,230.20000000000002) scale(0.9,1)">0</text>
<rect x="683.2" y="225.4" width="1.8" height="1" fill="#fff" stroke="none"/>
</g>
<g font-family="Liberation Sans, sans-serif" font-size="12" fill="#fff" stroke="#fff" stroke-width="0.3">
<text transform="translate(719.6,139.8) scale(0.9,1)">25</text>
<rect x="717.6" y="135.0" width="1.8" height="1" fill="#fff" stroke="none"/>
<text transform="translate(719.6,157.9) scale(0.9,1)">20</text>
<rect x="717.6" y="153.1" width="1.8" height="1" fill="#fff" stroke="none"/>
<text transform="translate(719.6,176.0) scale(0.9,1)">15</text>
<rect x="717.6" y="171.2" width="1.8" height="1" fill="#fff" stroke="none"/>
<text transform="translate(719.6,194.10000000000002) scale(0.9,1)">10</text>
<rect x="717.6" y="189.3" width="1.8" height="1" fill="#fff" stroke="none"/>
<text transform="translate(719.6,212.10000000000002) scale(0.9,1)">5</text>
<rect x="717.6" y="207.3" width="1.8" height="1" fill="#fff" stroke="none"/>
<text transform="translate(719.6,230.20000000000002) scale(0.9,1)">0</text>
<rect x="717.6" y="225.4" width="1.8" height="1" fill="#fff" stroke="none"/>
</g>
<g font-family="Liberation Sans, sans-serif" font-size="12" fill="#fff" stroke="#fff" stroke-width="0.3">
<text transform="translate(770.7,139.8) scale(0.9,1)">25</text>
<rect x="768.7" y="135.0" width="1.8" height="1" fill="#fff" stroke="none"/>
<text transform="translate(770.7,162.4) scale(0.9,1)">12</text>
<rect x="768.7" y="157.6" width="1.8" height="1" fill="#fff" stroke="none"/>
<text transform="translate(770.7,185.0) scale(0.9,1)">0.</text>
<rect x="768.7" y="180.2" width="1.8" height="1" fill="#fff" stroke="none"/>
<text transform="translate(770.7,207.60000000000002) scale(0.9,1)">-1</text>
<rect x="768.7" y="202.8" width="1.8" height="1" fill="#fff" stroke="none"/>
<text transform="translate(770.7,230.20000000000002) scale(0.9,1)">-2</text>
<rect x="768.7" y="225.4" width="1.8" height="1" fill="#fff" stroke="none"/>
</g>
<g font-family="Liberation Sans, sans-serif" font-size="12" fill="#fff" stroke="#fff" stroke-width="0.3">
</g>
<g font-family="Liberation Sans, sans-serif" font-size="12" fill="#fff" stroke="#fff" stroke-width="0.3">
<text transform="translate(842,139.8) scale(0.9,1)">25</text>
<rect x="840" y="135.0" width="1.8" height="1" fill="#fff" stroke="none"/>
<text transform="translate(842,162.4) scale(0.9,1)">12</text>
<rect x="840" y="157.6" width="1.8" height="1" fill="#fff" stroke="none"/>
<text transform="translate(842,185.0) scale(0.9,1)">0.</text>
<rect x="840" y="180.2" width="1.8" height="1" fill="#fff" stroke="none"/>
<text transform="translate(842,207.60000000000002) scale(0.9,1)">-1</text>
<rect x="840" y="202.8" width="1.8" height="1" fill="#fff" stroke="none"/>
<text transform="translate(842,230.20000000000002) scale(0.9,1)">-2</text>
<rect x="840" y="225.4" width="1.8" height="1" fill="#fff" stroke="none"/>
</g>
<g font-family="Liberation Sans, sans-serif" font-size="12" fill="#fff" stroke="#fff" stroke-width="0.3">
</g>
<rect x="430.5" y="129.4" width="28" height="103.79999999999998" fill="#d4d4d4"/>
<rect x="431.3" y="130.20000000000002" width="26.4" height="102.19999999999999" fill="#f6f6f6"/>
<rect x="433.5" y="132.4" width="22" height="97.79999999999998" fill="#a8a8a8"/>
<rect x="434.5" y="133.4" width="20" height="95.79999999999998" fill="#803868"/>
<g shape-rendering="crispEdges"><polygon points="434.5,133.4 454.5,133.4 444.5,181.3" fill="url(#kT)"/><polygon points="434.5,229.2 454.5,229.2 444.5,181.3" fill="url(#kB)"/><polygon points="434.5,133.4 444.5,181.3 434.5,229.2" fill="url(#kL)"/><polygon points="454.5,133.4 444.5,181.3 454.5,229.2" fill="url(#kR)"/></g>
<rect x="434.5" y="174.4" width="20" height="1.2" fill="#f0f0f0"/>
<rect x="434.5" y="177" width="20" height="52.19999999999999" fill="url(#gr)"/>
<rect x="434.5" y="175.8" width="20" height="1.6" fill="#e8ffe8"/>
<rect x="455.9" y="131.4" width="1.6" height="91.79999999999998" fill="#e08898"/>
<text x="461" y="244.6" font-family="Liberation Sans, sans-serif" font-size="12.8" fill="#fff" stroke="#fff" stroke-width="0.25" text-anchor="end">6</text>
<rect x="467.8" y="129.4" width="28" height="103.79999999999998" fill="#d4d4d4"/>
<rect x="468.6" y="130.20000000000002" width="26.4" height="102.19999999999999" fill="#f6f6f6"/>
<rect x="470.8" y="132.4" width="22" height="97.79999999999998" fill="#a8a8a8"/>
<rect x="471.8" y="133.4" width="20" height="95.79999999999998" fill="#06489c"/>
<g shape-rendering="crispEdges"><polygon points="471.8,133.4 491.8,133.4 481.8,181.3" fill="url(#bT)"/><polygon points="471.8,229.2 491.8,229.2 481.8,181.3" fill="url(#bB)"/><polygon points="471.8,133.4 481.8,181.3 471.8,229.2" fill="url(#bL)"/><polygon points="491.8,133.4 481.8,181.3 491.8,229.2" fill="url(#bR)"/></g>
<rect x="471.8" y="214" width="20" height="15.199999999999989" fill="url(#gr)"/>
<rect x="471.8" y="212.8" width="20" height="1.6" fill="#e8ffe8"/>
<text x="499.5" y="244.6" font-family="Liberation Sans, sans-serif" font-size="12.8" fill="#fff" stroke="#fff" stroke-width="0.25" text-anchor="end">7</text>
<rect x="512" y="129.4" width="28" height="103.79999999999998" fill="#d4d4d4"/>
<rect x="512.8" y="130.20000000000002" width="26.4" height="102.19999999999999" fill="#f6f6f6"/>
<rect x="515" y="132.4" width="22" height="97.79999999999998" fill="#a8a8a8"/>
<rect x="516" y="133.4" width="20" height="95.79999999999998" fill="#06489c"/>
<g shape-rendering="crispEdges"><polygon points="516,133.4 536,133.4 526.0,181.3" fill="url(#bT)"/><polygon points="516,229.2 536,229.2 526.0,181.3" fill="url(#bB)"/><polygon points="516,133.4 526.0,181.3 516,229.2" fill="url(#bL)"/><polygon points="536,133.4 526.0,181.3 536,229.2" fill="url(#bR)"/></g>
<rect x="577.8" y="129.4" width="28" height="103.79999999999998" fill="#d4d4d4"/>
<rect x="578.5999999999999" y="130.20000000000002" width="26.4" height="102.19999999999999" fill="#f6f6f6"/>
<rect x="580.8" y="132.4" width="22" height="97.79999999999998" fill="#a8a8a8"/>
<rect x="581.8" y="133.4" width="20" height="95.79999999999998" fill="#06489c"/>
<g shape-rendering="crispEdges"><polygon points="581.8,133.4 601.8,133.4 591.8,181.3" fill="url(#bT)"/><polygon points="581.8,229.2 601.8,229.2 591.8,181.3" fill="url(#bB)"/><polygon points="581.8,133.4 591.8,181.3 581.8,229.2" fill="url(#bL)"/><polygon points="601.8,133.4 591.8,181.3 601.8,229.2" fill="url(#bR)"/></g>
<rect x="581.8" y="147.2" width="20" height="1" fill="#e8e8e8"/>
<rect x="581.8" y="204" width="20" height="25.19999999999999" fill="url(#gr)"/>
<rect x="581.8" y="202.8" width="20" height="1.6" fill="#e8ffe8"/>
<text x="609" y="244.6" font-family="Liberation Sans, sans-serif" font-size="12.8" fill="#fff" stroke="#fff" stroke-width="0.25" text-anchor="end">6.9</text>
<rect x="618.3" y="129.4" width="28" height="103.79999999999998" fill="#d4d4d4"/>
<rect x="619.0999999999999" y="130.20000000000002" width="26.4" height="102.19999999999999" fill="#f6f6f6"/>
<rect x="621.3" y="132.4" width="22" height="97.79999999999998" fill="#a8a8a8"/>
<rect x="622.3" y="133.4" width="20" height="95.79999999999998" fill="#06489c"/>
<g shape-rendering="crispEdges"><polygon points="622.3,133.4 642.3,133.4 632.3,181.3" fill="url(#bT)"/><polygon points="622.3,229.2 642.3,229.2 632.3,181.3" fill="url(#bB)"/><polygon points="622.3,133.4 632.3,181.3 622.3,229.2" fill="url(#bL)"/><polygon points="642.3,133.4 632.3,181.3 642.3,229.2" fill="url(#bR)"/></g>
<rect x="622.3" y="136.8" width="20" height="1" fill="#e8e8e8"/>
<rect x="622.3" y="190" width="20" height="39.19999999999999" fill="url(#gr)"/>
<rect x="622.3" y="188.8" width="20" height="1.6" fill="#e8ffe8"/>
<text x="648" y="244.6" font-family="Liberation Sans, sans-serif" font-size="12.8" fill="#fff" stroke="#fff" stroke-width="0.25" text-anchor="end">422</text>
<rect x="655.2" y="129.4" width="28" height="103.79999999999998" fill="#d4d4d4"/>
<rect x="656.0" y="130.20000000000002" width="26.4" height="102.19999999999999" fill="#f6f6f6"/>
<rect x="658.2" y="132.4" width="22" height="97.79999999999998" fill="#a8a8a8"/>
<rect x="659.2" y="133.4" width="20" height="95.79999999999998" fill="#06489c"/>
<g shape-rendering="crispEdges"><polygon points="659.2,133.4 679.2,133.4 669.2,181.3" fill="url(#bT)"/><polygon points="659.2,229.2 679.2,229.2 669.2,181.3" fill="url(#bB)"/><polygon points="659.2,133.4 669.2,181.3 659.2,229.2" fill="url(#bL)"/><polygon points="679.2,133.4 669.2,181.3 679.2,229.2" fill="url(#bR)"/></g>
<rect x="659.2" y="136.8" width="20" height="1" fill="#e8e8e8"/>
<rect x="659.2" y="222" width="20" height="7.199999999999989" fill="url(#gr)"/>
<rect x="659.2" y="220.8" width="20" height="1.6" fill="#e8ffe8"/>
<text x="685.5" y="244.6" font-family="Liberation Sans, sans-serif" font-size="12.8" fill="#fff" stroke="#fff" stroke-width="0.25" text-anchor="end">84</text>
<rect x="689.6" y="129.4" width="28" height="103.79999999999998" fill="#d4d4d4"/>
<rect x="690.4" y="130.20000000000002" width="26.4" height="102.19999999999999" fill="#f6f6f6"/>
<rect x="692.6" y="132.4" width="22" height="97.79999999999998" fill="#a8a8a8"/>
<rect x="693.6" y="133.4" width="20" height="95.79999999999998" fill="#06489c"/>
<g shape-rendering="crispEdges"><polygon points="693.6,133.4 713.6,133.4 703.6,181.3" fill="url(#bT)"/><polygon points="693.6,229.2 713.6,229.2 703.6,181.3" fill="url(#bB)"/><polygon points="693.6,133.4 703.6,181.3 693.6,229.2" fill="url(#bL)"/><polygon points="713.6,133.4 703.6,181.3 713.6,229.2" fill="url(#bR)"/></g>
<rect x="693.6" y="147.2" width="20" height="1" fill="#e8e8e8"/>
<rect x="693.6" y="204" width="20" height="25.19999999999999" fill="url(#gr)"/>
<rect x="693.6" y="202.8" width="20" height="1.6" fill="#e8ffe8"/>
<text x="720" y="244.6" font-family="Liberation Sans, sans-serif" font-size="12.8" fill="#fff" stroke="#fff" stroke-width="0.25" text-anchor="end">6.9</text>
<rect x="740.7" y="129.4" width="28" height="103.79999999999998" fill="#d4d4d4"/>
<rect x="741.5" y="130.20000000000002" width="26.4" height="102.19999999999999" fill="#f6f6f6"/>
<rect x="743.7" y="132.4" width="22" height="97.79999999999998" fill="#a8a8a8"/>
<rect x="744.7" y="133.4" width="20" height="95.79999999999998" fill="#06489c"/>
<g shape-rendering="crispEdges"><polygon points="744.7,133.4 764.7,133.4 754.7,181.3" fill="url(#bT)"/><polygon points="744.7,229.2 764.7,229.2 754.7,181.3" fill="url(#bB)"/><polygon points="744.7,133.4 754.7,181.3 744.7,229.2" fill="url(#bL)"/><polygon points="764.7,133.4 754.7,181.3 764.7,229.2" fill="url(#bR)"/></g>
<rect x="744.7" y="180.7" width="20" height="1" fill="#e8e8e8"/>
<rect x="766.1" y="131.4" width="1.6" height="20" fill="#e08898"/>
<rect x="766.1" y="211.2" width="1.6" height="20" fill="#e08898"/>
<text x="772" y="244.6" font-family="Liberation Sans, sans-serif" font-size="12.8" fill="#fff" stroke="#fff" stroke-width="0.25" text-anchor="end">0.0</text>
<rect x="781" y="129.4" width="28" height="103.79999999999998" fill="#d4d4d4"/>
<rect x="781.8" y="130.20000000000002" width="26.4" height="102.19999999999999" fill="#f6f6f6"/>
<rect x="784" y="132.4" width="22" height="97.79999999999998" fill="#a8a8a8"/>
<rect x="785" y="133.4" width="20" height="95.79999999999998" fill="#06489c"/>
<g shape-rendering="crispEdges"><polygon points="785,133.4 805,133.4 795.0,181.3" fill="url(#bT)"/><polygon points="785,229.2 805,229.2 795.0,181.3" fill="url(#bB)"/><polygon points="785,133.4 795.0,181.3 785,229.2" fill="url(#bL)"/><polygon points="805,133.4 795.0,181.3 805,229.2" fill="url(#bR)"/></g>
<rect x="785" y="177" width="20" height="4" fill="#20c020"/>
<rect x="785" y="178" width="20" height="1.6" fill="#d8ffd8"/>
<text x="812" y="244.6" font-family="Liberation Sans, sans-serif" font-size="12.8" fill="#fff" stroke="#fff" stroke-width="0.25" text-anchor="end">1.9</text>
<rect x="812" y="129.4" width="28" height="103.79999999999998" fill="#d4d4d4"/>
<rect x="812.8" y="130.20000000000002" width="26.4" height="102.19999999999999" fill="#f6f6f6"/>
<rect x="815" y="132.4" width="22" height="97.79999999999998" fill="#a8a8a8"/>
<rect x="816" y="133.4" width="20" height="95.79999999999998" fill="#06489c"/>
<g shape-rendering="crispEdges"><polygon points="816,133.4 836,133.4 826.0,181.3" fill="url(#bT)"/><polygon points="816,229.2 836,229.2 826.0,181.3" fill="url(#bB)"/><polygon points="816,133.4 826.0,181.3 816,229.2" fill="url(#bL)"/><polygon points="836,133.4 826.0,181.3 836,229.2" fill="url(#bR)"/></g>
<rect x="816" y="177" width="20" height="4" fill="#20c020"/>
<rect x="816" y="178" width="20" height="1.6" fill="#d8ffd8"/>
<text x="843" y="244.6" font-family="Liberation Sans, sans-serif" font-size="12.8" fill="#fff" stroke="#fff" stroke-width="0.25" text-anchor="end">1.5</text>
<rect x="852" y="129.4" width="28" height="103.79999999999998" fill="#d4d4d4"/>
<rect x="852.8" y="130.20000000000002" width="26.4" height="102.19999999999999" fill="#f6f6f6"/>
<rect x="855" y="132.4" width="22" height="97.79999999999998" fill="#a8a8a8"/>
<rect x="856" y="133.4" width="20" height="95.79999999999998" fill="#06489c"/>
<g shape-rendering="crispEdges"><polygon points="856,133.4 876,133.4 866.0,181.3" fill="url(#bT)"/><polygon points="856,229.2 876,229.2 866.0,181.3" fill="url(#bB)"/><polygon points="856,133.4 866.0,181.3 856,229.2" fill="url(#bL)"/><polygon points="876,133.4 866.0,181.3 876,229.2" fill="url(#bR)"/></g>
<rect x="856" y="180.7" width="20" height="1" fill="#e8e8e8"/>
<rect x="877.4" y="131.4" width="1.6" height="20" fill="#e08898"/>
<rect x="877.4" y="211.2" width="1.6" height="20" fill="#e08898"/>
<text x="886" y="244.6" font-family="Liberation Sans, sans-serif" font-size="12.8" fill="#fff" stroke="#fff" stroke-width="0.25" text-anchor="end">0.0</text>
<text x="433" y="126.3" font-family="Liberation Sans, sans-serif" font-size="12.5" font-weight="bold" fill="#fff" stroke="#fff" stroke-width="0.25">KR</text>
<text x="471" y="126.3" font-family="Liberation Sans, sans-serif" font-size="12.5" fill="#fff" stroke="#fff" stroke-width="0.25">Advance</text>
<text x="516.5" y="126.3" font-family="Liberation Sans, sans-serif" font-size="12.5" fill="#fff" stroke="#fff" stroke-width="0.25">TPS</text>
<text x="581.5" y="126.3" font-family="Liberation Sans, sans-serif" font-size="12.5" fill="#fff" stroke="#fff" stroke-width="0.25">INJ B1</text>
<text x="621" y="126.3" font-family="Liberation Sans, sans-serif" font-size="12.5" fill="#fff" stroke="#fff" stroke-width="0.25">O2 B1</text>
<text x="657.8" y="126.3" font-family="Liberation Sans, sans-serif" font-size="12.5" fill="#fff" stroke="#fff" stroke-width="0.25">O2 B2</text>
<text x="693" y="126.3" font-family="Liberation Sans, sans-serif" font-size="12.5" fill="#fff" stroke="#fff" stroke-width="0.25">INJ B2</text>
<text x="745" y="126.3" font-family="Liberation Sans, sans-serif" font-size="12.5" fill="#fff" stroke="#fff" stroke-width="0.25">LT B1</text>
<text x="784" y="126.3" font-family="Liberation Sans, sans-serif" font-size="12.5" fill="#fff" stroke="#fff" stroke-width="0.25">ST B1</text>
<text x="815.5" y="126.3" font-family="Liberation Sans, sans-serif" font-size="12.5" fill="#fff" stroke="#fff" stroke-width="0.25">ST B2</text>
<text x="855" y="126.3" font-family="Liberation Sans, sans-serif" font-size="12.5" fill="#fff" stroke="#fff" stroke-width="0.25">LT B2</text>
</svg></div>
<div id="midw"></div><div id="mid">
<div class="sel"></div>
<svg style="position:absolute;left:2px;top:-1px" width="16" height="16" viewBox="0 0 16 16"><rect x="0.5" y="0.5" width="15" height="15" fill="#fff" stroke="#6c6cc0"/><rect x="1" y="1" width="14" height="3.5" fill="#8888e0"/><rect x="1" y="1" width="14" height="1.2" fill="#a8a8f0"/><rect x="1" y="4.5" width="4" height="10.5" fill="#a8a8ec"/><path d="M1 4.5H15M1 8H15M1 11.5H15M5.5 1V15M10.5 1V15" stroke="#8484c8" stroke-width="1" fill="none"/></svg>
<span class="mi" style="top:-3px">Spark Retard</span>
<svg style="position:absolute;left:2px;top:22px" width="16" height="16" viewBox="0 0 16 16"><rect x="0.5" y="0.5" width="15" height="15" fill="#fff" stroke="#6c6cc0"/><rect x="1" y="1" width="14" height="3.5" fill="#8888e0"/><rect x="1" y="1" width="14" height="1.2" fill="#a8a8f0"/><rect x="1" y="4.5" width="4" height="10.5" fill="#a8a8ec"/><path d="M1 4.5H15M1 8H15M1 11.5H15M5.5 1V15M10.5 1V15" stroke="#8484c8" stroke-width="1" fill="none"/></svg>
<span class="mi" style="top:20px">LT Fuel Trim</span>
<svg style="position:absolute;left:2px;top:45px" width="16" height="16" viewBox="0 0 16 16"><rect x="0.5" y="0.5" width="15" height="15" fill="#fff" stroke="#6c6cc0"/><rect x="1" y="1" width="14" height="3.5" fill="#8888e0"/><rect x="1" y="1" width="14" height="1.2" fill="#a8a8f0"/><rect x="1" y="4.5" width="4" height="10.5" fill="#a8a8ec"/><path d="M1 4.5H15M1 8H15M1 11.5H15M5.5 1V15M10.5 1V15" stroke="#8484c8" stroke-width="1" fill="none"/></svg>
<span class="mi" style="top:43px">ST Fuel Trim</span>
<svg style="position:absolute;left:2px;top:68px" width="16" height="16" viewBox="0 0 16 16"><rect x="0.5" y="0.5" width="15" height="15" fill="#fff" stroke="#6c6cc0"/><rect x="1" y="1" width="14" height="3.5" fill="#8888e0"/><rect x="1" y="1" width="14" height="1.2" fill="#a8a8f0"/><rect x="1" y="4.5" width="4" height="10.5" fill="#a8a8ec"/><path d="M1 4.5H15M1 8H15M1 11.5H15M5.5 1V15M10.5 1V15" stroke="#8484c8" stroke-width="1" fill="none"/></svg>
<span class="mi" style="top:66px">O2 (mv)</span>
</div>
<div id="vlab"><span>ld Absolute Pressure (kPa) [Se</span></div>
<div id="rt">
<div class="h" style="left:35px;top:2px;width:36.5px;height:18px;line-height:17px">0.8</div>
<div class="h" style="left:71.5px;top:2px;width:36.200000000000045px;height:18px;line-height:17px">1.2</div>
<div class="h sel" style="left:107.70000000000005px;top:2px;width:36.299999999999955px;height:18px;line-height:17px">1.6</div>
<div class="h" style="left:144px;top:2px;width:36px;height:18px;line-height:17px">2.0</div>
<div class="h" style="left:0;top:2px;width:35px;height:18px"></div>
<div class="rh" style="top:20px;height:17px;line-height:18px;width:35px">50</div>
<div class="c" style="left:35px;top:20px;width:36.5px;height:17px;line-height:18px">0</div>
<div class="c" style="left:71.5px;top:20px;width:36.200000000000045px;height:17px;line-height:18px">0</div>
<div class="c" style="left:107.70000000000005px;top:20px;width:36.299999999999955px;height:17px;line-height:18px">0</div>
<div class="c" style="left:144px;top:20px;width:36px;height:17px;line-height:18px">0</div>
<div class="rh" style="top:37px;height:17px;line-height:18px;width:35px">55</div>
<div class="c" style="left:35px;top:37px;width:36.5px;height:17px;line-height:18px">0</div>
<div class="c" style="left:71.5px;top:37px;width:36.200000000000045px;height:17px;line-height:18px">0</div>
<div class="c" style="left:107.70000000000005px;top:37px;width:36.299999999999955px;height:17px;line-height:18px">0</div>
<div class="c" style="left:144px;top:37px;width:36px;height:17px;line-height:18px">0</div>
<div class="rh" style="top:54px;height:17px;line-height:18px;width:35px">60</div>
<div class="c" style="left:35px;top:54px;width:36.5px;height:17px;line-height:18px">0</div>
<div class="c" style="left:71.5px;top:54px;width:36.200000000000045px;height:17px;line-height:18px">0</div>
<div class="c" style="left:107.70000000000005px;top:54px;width:36.299999999999955px;height:17px;line-height:18px">0</div>
<div class="c" style="left:144px;top:54px;width:36px;height:17px;line-height:18px">0</div>
<div class="rh" style="top:71px;height:17px;line-height:18px;width:35px">65</div>
<div class="c" style="left:35px;top:71px;width:36.5px;height:17px;line-height:18px">0</div>
<div class="c" style="left:71.5px;top:71px;width:36.200000000000045px;height:17px;line-height:18px">0</div>
<div class="c" style="left:107.70000000000005px;top:71px;width:36.299999999999955px;height:17px;line-height:18px">0</div>
<div class="c" style="left:144px;top:71px;width:36px;height:17px;line-height:18px">0</div>
<div class="rh" style="top:88px;height:17px;line-height:18px;width:35px">70</div>
<div class="c" style="left:35px;top:88px;width:36.5px;height:17px;line-height:18px">0</div>
<div class="c" style="left:71.5px;top:88px;width:36.200000000000045px;height:17px;line-height:18px">0</div>
<div class="c" style="left:107.70000000000005px;top:88px;width:36.299999999999955px;height:17px;line-height:18px">0</div>
<div class="c" style="left:144px;top:88px;width:36px;height:17px;line-height:18px">0</div>
<div class="rh" style="top:105px;height:17px;line-height:18px;width:35px">75</div>
<div class="c" style="left:35px;top:105px;width:36.5px;height:17px;line-height:18px">0</div>
<div class="c p1" style="left:71.5px;top:105px;width:36.200000000000045px;height:17px;line-height:18px">0</div>
<div class="c" style="left:107.70000000000005px;top:105px;width:36.299999999999955px;height:17px;line-height:18px">0</div>
<div class="c" style="left:144px;top:105px;width:36px;height:17px;line-height:18px">0</div>
<div class="rh" style="top:122px;height:17px;line-height:18px;width:35px">80</div>
<div class="c" style="left:35px;top:122px;width:36.5px;height:17px;line-height:18px">0</div>
<div class="c p1" style="left:71.5px;top:122px;width:36.200000000000045px;height:17px;line-height:18px">0</div>
<div class="c" style="left:107.70000000000005px;top:122px;width:36.299999999999955px;height:17px;line-height:18px">0</div>
<div class="c" style="left:144px;top:122px;width:36px;height:17px;line-height:18px">0</div>
<div class="rh" style="top:139px;height:17px;line-height:18px;width:35px">85</div>
<div class="c" style="left:35px;top:139px;width:36.5px;height:17px;line-height:18px">0</div>
<div class="c p1" style="left:71.5px;top:139px;width:36.200000000000045px;height:17px;line-height:18px">0</div>
<div class="c" style="left:107.70000000000005px;top:139px;width:36.299999999999955px;height:17px;line-height:18px">0</div>
<div class="c" style="left:144px;top:139px;width:36px;height:17px;line-height:18px">0</div>
<div class="rh" style="top:156px;height:17px;line-height:18px;width:35px">90</div>
<div class="c p2" style="left:35px;top:156px;width:36.5px;height:17px;line-height:18px">1</div>
<div class="c p2" style="left:71.5px;top:156px;width:36.200000000000045px;height:17px;line-height:18px">1</div>
<div class="c" style="left:107.70000000000005px;top:156px;width:36.299999999999955px;height:17px;line-height:18px">0</div>
<div class="c p1" style="left:144px;top:156px;width:36px;height:17px;line-height:18px">0</div>
<div class="rh" style="top:173px;height:17px;line-height:18px;width:35px">95</div>
<div class="c" style="left:35px;top:173px;width:36.5px;height:17px;line-height:18px">0</div>
<div class="c" style="left:71.5px;top:173px;width:36.200000000000045px;height:17px;line-height:18px"></div>
<div class="c" style="left:107.70000000000005px;top:173px;width:36.299999999999955px;height:17px;line-height:18px">0</div>
<div class="c p1" style="left:144px;top:173px;width:36px;height:17px;line-height:18px">0</div>
<div class="rh sel" style="top:190px;height:17px;line-height:18px;width:35px">100</div>
<div class="c" style="left:35px;top:190px;width:36.5px;height:17px;line-height:18px"></div>
<div class="c" style="left:71.5px;top:190px;width:36.200000000000045px;height:17px;line-height:18px"></div>
<div class="c cs" style="left:107.70000000000005px;top:190px;width:36.299999999999955px;height:17px;line-height:18px">0</div>
<div class="c p1" style="left:144px;top:190px;width:36px;height:17px;line-height:18px">0</div>
<div class="rh" style="top:207px;height:17px;line-height:18px;width:35px">105</div>
<div class="c" style="left:35px;top:207px;width:36.5px;height:17px;line-height:18px"></div>
<div class="c" style="left:71.5px;top:207px;width:36.200000000000045px;height:17px;line-height:18px"></div>
<div class="c p2" style="left:107.70000000000005px;top:207px;width:36.299999999999955px;height:17px;line-height:18px">1</div>
<div class="c p1" style="left:144px;top:207px;width:36px;height:17px;line-height:18px">0</div>
<div class="gs"></div>
<div class="hs"><svg style="position:absolute;left:4px;top:3px" width="10" height="11" viewBox="0 0 10 11"><path d="M7 1.5L3 5.5L7 9.5" fill="none" stroke="#555" stroke-width="1.6"/></svg><div class="th"></div></div>
</div>
<div id="cv">
<svg style="position:absolute;left:0;top:0" width="778" height="26" viewBox="420 250 778 26"><rect x="420" y="251" width="778" height="1" fill="#a0a0a0"/><path d="M427.5 275.5 L444.5 256 Q445 255.5 446 255.5 L528 255.5 Q530.5 255.5 530.5 258 L530.5 275.5" fill="#fff" stroke="#606060" stroke-width="1"/><rect x="421" y="275" width="7" height="1" fill="#606060"/><rect x="531" y="275" width="667" height="1" fill="#606060"/><text x="446.5" y="269" font-family="Liberation Sans, sans-serif" font-size="12" font-weight="bold" fill="#000" textLength="78" lengthAdjust="spacingAndGlyphs">Chart vs. Time</text></svg>
<div id="ro">
<div class="rb" style="top:0px;height:52px"></div>
<div class="rb" style="top:54px;height:52px"></div>
<div class="rb" style="top:108px;height:52px"></div>
<div class="rb" style="top:162px;height:52px"></div>
<div class="rb" style="top:216px;height:53px"></div>
<span class="rl" style="top:0px;right:268px;color:#f02020">RPM (rpm)</span>
<span class="rv" style="top:13.3px;right:270.5px;color:#f02020">1,527</span>
<span class="rl" style="top:0px;right:181px;color:#30e030">Speed (mph)</span>
<span class="rv" style="top:13.3px;right:181.70000000000005px;color:#30e030">50</span>
<span class="rl" style="top:0px;right:91px;color:#ffffff">INJ Duty (%)</span>
<span class="rv" style="top:13.3px;right:92.70000000000005px;color:#ffffff">8.8</span>
<span class="rl" style="top:54px;right:268px;color:#40c8e0">MAF (lb/min)</span>
<span class="rl" style="top:54px;right:181px;color:#f020f0">MAP (kPa)</span>
<span class="rv" style="top:67.3px;right:181.70000000000005px;color:#f020f0">97.6</span>
<span class="rl" style="top:54px;right:91px;color:#30e830">O2 (mV)</span>
<span class="rv" style="top:67.3px;right:92.70000000000005px;color:#30e830">253</span>
<span class="rl" style="top:108px;right:268px;color:#f02020">KR (°)</span>
<span class="rv" style="top:121.3px;right:270.5px;color:#f02020">5.5</span>
<span class="rl" style="top:108px;right:181px;color:#ffffff">Spark (°)</span>
<span class="rv" style="top:121.3px;right:181.70000000000005px;color:#ffffff">7.5</span>
<span class="rl" style="top:108px;right:91px;color:#30d030">TPS (%)</span>
<span class="rl" style="top:162px;right:268px;color:#f02020">INJ B1 (ms)</span>
<span class="rv" style="top:175.3px;right:270.5px;color:#f02020">6.9</span>
<span class="rl" style="top:162px;right:181px;color:#8888f8">O2 B1S1 (mV)</span>
<span class="rv" style="top:175.3px;right:181.70000000000005px;color:#8888f8">422</span>
<span class="rl" style="top:162px;right:91px;color:#f08828">INJ B2 (ms)</span>
<span class="rv" style="top:175.3px;right:92.70000000000005px;color:#f08828">6.9</span>
<span class="rl" style="top:162px;right:4px;color:#38d0f0">O2 B2S1 (mV)</span>
<span class="rv" style="top:175.3px;right:4.5px;color:#38d0f0">84</span>
<span class="rl" style="top:216px;right:268px;color:#f02020">LTFT B1 (%)</span>
<span class="rv" style="top:229.3px;right:270.5px;color:#f02020">0.0</span>
<span class="rl" style="top:216px;right:181px;color:#8888f8">STFT B1 (%)</span>
<span class="rv" style="top:229.3px;right:181.70000000000005px;color:#8888f8">1.9</span>
<span class="rl" style="top:216px;right:91px;color:#f08828">LTFT B2 (%)</span>
<span class="rv" style="top:229.3px;right:92.70000000000005px;color:#f08828">0.0</span>
<span class="rl" style="top:216px;right:4px;color:#38d0f0">STFT B2 (%)</span>
<span class="rv" style="top:229.3px;right:4.5px;color:#38d0f0">1.5</span>
<div class="rs" style="top:52px"></div>
<div class="rs" style="top:106px"></div>
<div class="rs" style="top:160px"></div>
<div class="rs" style="top:214px"></div>
</div>
<svg id="ch" width="423" height="269" viewBox="775 277 423 269">
<defs><linearGradient id="cbg" x1="0" y1="0" x2="0" y2="1"><stop offset="0" stop-color="#000008"/><stop offset="1" stop-color="#08083c"/></linearGradient>
<clipPath id="cl0"><rect x="775" y="277" width="423" height="52"/></clipPath>
<clipPath id="cl1"><rect x="775" y="331" width="423" height="52"/></clipPath>
<clipPath id="cl2"><rect x="775" y="385" width="423" height="52"/></clipPath>
<clipPath id="cl3"><rect x="775" y="439" width="423" height="52"/></clipPath>
<clipPath id="cl4"><rect x="775" y="493" width="423" height="53"/></clipPath>
</defs>
<rect x="775" y="277" width="423" height="52" fill="url(#cbg)"/>
<rect x="775" y="331" width="423" height="52" fill="url(#cbg)"/>
<rect x="775" y="385" width="423" height="52" fill="url(#cbg)"/>
<rect x="775" y="439" width="423" height="52" fill="url(#cbg)"/>
<rect x="775" y="493" width="423" height="53" fill="url(#cbg)"/>
<path d="M775 290.4H1198M775 303.8H1198M775 317.2H1198M775 344.4H1198M775 357.8H1198M775 371.2H1198M775 398.4H1198M775 411.8H1198M775 425.2H1198M775 452.4H1198M775 465.8H1198M775 479.2H1198M775 506.5H1198M775 534H1198" stroke="#747478" stroke-width="0.9" fill="none"/>
<g clip-path="url(#cl0)">
<polyline points="775.0,329.0 884.5,329.0 889.9,327.0 900.6,327.0 905.1,325.6 911.4,327.4 925.8,327.9 928.4,326.7 932.0,327.0 934.7,329.0 983.0,329.2 1002.7,329.2 1006.3,327.9 1009.6,328.8 1011.7,312.7 1015.3,301.9 1016.2,292.9 1017.5,307.3 1021.6,303.7 1024.6,301.9 1026.1,314.5 1027.9,327.0 1029.7,329.2 1051.2,328.8 1054.8,327.9 1058.4,328.8 1067.4,328.5 1069.7,322.6 1071.3,328.5 1096.1,328.5 1097.9,324.4 1108.6,323.8 1115.8,326.1 1124.8,327.0 1127.5,310.9 1131.6,287.6 1133.8,301.9 1137.3,310.9 1139.5,327.0 1140.9,329.2 1171.4,328.8 1175.0,327.6 1184.0,327.6 1187.6,328.8 1191.2,327.9 1193.0,316.3 1195.7,292.9 1198.0,289.4" fill="none" stroke="#ffffff" stroke-width="2" stroke-linejoin="round" />
<polyline points="775.0,316.6 807.3,317.2 813.6,319.0 819.9,322.6 828.8,322.0 832.4,319.9 836.9,320.2 840.5,322.0 854.0,323.1 871.9,323.8 879.1,323.5 882.7,323.1 886.3,319.0 889.9,313.6 892.6,314.8 898.8,309.1 902.4,311.8 907.8,310.0 911.4,312.7 916.8,313.0 919.5,315.9 932.9,316.6 937.4,318.4 963.4,318.4 967.0,319.5 983.0,318.4 1009.0,318.1 1011.7,307.3 1014.4,285.8 1015.3,277.7 1016.2,292.9 1021.6,285.8 1024.6,283.1 1026.1,292.9 1029.7,300.1 1032.4,307.3 1035.0,310.9 1045.8,312.3 1079.9,312.7 1089.8,316.6 1097.9,313.6 1108.6,313.0 1124.8,311.8 1126.6,301.9 1129.3,285.8 1132.9,281.3 1135.5,281.8 1138.2,292.9 1141.8,305.5 1146.3,310.0 1162.5,311.8 1184.0,312.3 1191.2,310.0 1193.9,292.9 1195.7,285.8 1198.0,284.0" fill="none" stroke="#f01818" stroke-width="2" stroke-linejoin="round" />
<polyline points="775.0,318.1 780.4,319.9 807.3,319.9 819.9,323.5 843.2,323.5 859.4,324.4 868.3,327.9 875.5,328.5 886.3,327.9 897.0,323.5 907.8,319.5 922.2,316.3 936.5,315.4 941.9,313.6 970.6,313.6 974.2,315.4 983.0,315.4 988.4,314.1 1009.0,314.1 1013.5,311.8 1024.3,303.7 1029.7,302.3 1042.2,304.6 1062.0,305.9 1070.9,305.2 1079.9,308.2 1090.7,310.5 1108.6,307.3 1126.6,305.5 1137.3,300.1 1142.7,300.1 1151.7,303.4 1171.4,305.9 1193.0,304.6 1198.0,303.7" fill="none" stroke="#18e018" stroke-width="2" stroke-linejoin="round" />
</g>
<g clip-path="url(#cl1)">
<polyline points="775.0,363.9 785.8,366.6 791.2,363.0 796.5,360.3 805.5,365.7 816.3,360.3 823.5,351.3 828.8,351.3 834.2,356.7 846.8,354.9 852.2,354.0 859.4,354.9 864.7,349.5 875.5,345.9 880.9,345.9 885.4,344.2 888.1,348.6 897.0,342.4 904.2,336.1 907.8,338.8 918.6,344.2 931.1,337.0 932.9,351.3 936.5,360.3 954.5,356.7 961.6,363.9 970.6,364.8 981.4,360.3 983.0,358.5 997.4,357.6 1009.6,335.2 1024.3,333.4 1027.0,345.9 1028.8,375.6 1035.0,374.7 1036.8,371.1 1049.4,370.2 1052.1,354.9 1054.8,353.1 1057.5,361.2 1067.4,333.4 1070.9,333.4 1072.7,369.3 1078.1,371.1 1090.7,369.3 1093.4,362.1 1096.1,331.6 1114.0,330.7 1119.4,337.0 1123.0,344.2 1125.7,342.4 1126.6,331.6 1137.3,331.6 1140.0,371.1 1148.1,372.0 1167.9,370.2 1171.4,353.1 1178.6,345.9 1183.1,345.9 1185.8,351.3 1191.2,331.6 1198.0,330.7" fill="none" stroke="#e828e8" stroke-width="1.8" stroke-linejoin="round" />
<polyline points="775.0,354.9 776.8,378.3 779.5,344.2 782.2,380.0 785.8,338.8 788.5,345.9 790.3,337.0 792.9,351.3 795.6,360.3 798.3,380.0 800.1,358.5 803.7,381.8 805.5,363.9 808.2,336.1 809.5,354.9 811.8,338.8 813.6,351.3 816.6,340.6 819.0,356.7 822.6,339.7 824.4,342.4 827.0,380.0 828.8,376.5 831.0,362.1 833.3,380.0 836.9,348.6 839.6,380.0 842.3,338.8 845.9,336.1 849.5,340.6 853.1,354.9 854.9,380.0 857.6,340.6 859.4,354.9 860.8,381.8 863.8,338.8 865.6,342.4 868.3,378.3 871.0,376.5 873.7,344.2 875.5,351.3 877.3,362.1 880.0,363.9 881.8,378.3 883.6,371.1 885.4,380.0 889.0,353.1 890.8,342.4 892.6,363.9 894.3,338.8 896.1,381.8 898.8,340.6 900.6,363.9 902.8,337.0 904.6,378.3 906.9,335.2 908.7,381.8 911.4,338.8 912.8,372.9 914.1,333.4 916.8,380.0 918.6,342.4 920.4,381.8 922.5,338.8 924.9,380.0 927.5,337.0 929.7,345.9 931.1,381.8 932.6,333.4 935.6,380.0 939.2,337.0 941.0,338.8 943.7,380.0 947.3,337.0 950.0,380.0 952.7,338.8 954.5,345.9 957.2,380.9 961.6,338.8 964.3,372.9 967.9,338.8 969.7,340.6 974.2,381.8 976.9,338.8 979.6,380.0 983.0,338.8 985.7,381.8 988.4,335.2 991.1,380.0 993.8,342.4 996.5,372.9 998.3,360.3 1000.9,338.8 1002.7,345.9 1004.5,381.8 1007.2,337.0 1009.6,381.8 1010.8,335.2 1014.4,337.0 1016.2,342.4 1018.9,338.8 1027.0,337.9 1028.8,360.3 1031.1,340.6 1033.3,349.5 1035.9,382.7 1049.4,382.7 1051.2,331.6 1053.9,380.0 1056.6,381.8 1058.4,333.4 1061.1,380.0 1063.8,335.2 1065.9,380.0 1068.8,338.8 1070.9,345.9 1072.7,381.8 1075.4,381.8 1078.1,340.6 1080.8,342.4 1083.5,381.8 1087.1,340.6 1088.9,381.8 1090.7,344.2 1092.5,340.6 1093.9,363.9 1095.2,345.9 1097.0,380.0 1098.4,349.5 1099.7,338.8 1101.4,381.8 1102.9,354.9 1105.0,342.4 1106.5,369.3 1107.7,381.8 1109.5,337.0 1110.8,363.9 1111.9,372.9 1113.1,335.2 1114.6,360.3 1115.8,367.5 1117.2,349.5 1118.5,342.4 1120.3,360.3 1121.5,353.1 1123.0,356.7 1124.8,372.9 1126.0,349.5 1127.5,335.2 1130.2,372.9 1132.0,337.0 1137.3,337.0 1139.1,338.8 1140.9,381.8 1144.5,333.4 1146.3,382.7 1169.6,382.7 1171.4,331.6 1174.1,381.8 1176.8,337.0 1178.6,381.8 1180.4,354.9 1183.1,356.7 1184.9,380.0 1187.6,338.8 1189.4,380.0 1193.0,335.2 1195.7,338.8 1198.0,380.0" fill="none" stroke="#10f010" stroke-width="2.5" stroke-linejoin="round" />
</g>
<g clip-path="url(#cl2)">
<rect x="775" y="436" width="423" height="1.2" fill="#a00c20"/>
<polygon points="827.5,437 829.7,434.9 831.9,437" fill="#f01828"/>
<polygon points="884.1,437 886.3,433.7 888.5,437" fill="#f01828"/>
<polygon points="1007.4,437 1009.6,417.9 1011.8,437" fill="#f01828"/>
<polygon points="1065.2,437 1067.4,420.6 1069.6,437" fill="#f01828"/>
<polygon points="1093.9,437 1096.1,427.8 1098.3,437" fill="#f01828"/>
<polygon points="1123.5,437 1125.7,428.7 1127.9,437" fill="#f01828"/>
<polygon points="1187.2,437 1189.4,423.3 1191.6,437" fill="#f01828"/>
<polyline points="775.0,424.7 781.3,424.7 787.6,427.8 789.4,414.3 792.0,391.0 794.7,390.1 799.2,392.8 801.9,387.4 806.9,387.0 809.1,432.3 810.9,429.0 819.0,436.7 821.7,433.1 823.5,434.9 826.1,432.3 827.9,435.8 830.6,417.9 833.3,397.3 837.8,396.4 840.5,435.8 843.2,434.0 846.8,433.1 852.2,431.4 857.6,436.7 862.9,430.5 864.7,432.3 866.5,429.6 868.3,434.0 872.8,425.1 875.5,424.2 880.0,422.4 882.7,419.7 883.6,424.2 887.2,399.9 889.9,393.7 894.3,405.3 897.0,394.6 900.6,393.7 903.3,407.1 906.0,407.1 909.6,399.0 911.4,404.4 915.0,394.6 917.7,394.6 919.5,410.7 921.3,405.3 926.7,407.1 930.2,410.7 933.8,392.8 936.5,388.3 939.2,395.5 943.7,393.7 947.3,397.3 953.6,397.3 958.1,389.2 963.4,389.5 966.1,432.3 967.9,430.5 972.4,429.6 975.1,393.7 979.6,392.8 982.3,395.5 983.0,395.5 995.6,395.5 997.4,393.1 1000.0,396.4 1004.5,399.0 1008.1,399.0 1009.6,417.9 1011.4,436.7 1012.6,426.9 1014.9,414.3 1016.2,436.7 1018.0,417.0 1025.2,416.1 1027.9,386.5 1029.3,385.6 1031.1,396.4 1033.3,398.2 1036.8,417.9 1039.5,435.8 1048.5,436.7 1051.2,417.9 1055.7,389.2 1058.4,386.5 1060.2,389.2 1062.0,385.6 1066.5,385.6 1068.2,414.3 1069.7,425.1 1071.8,385.6 1073.3,385.6 1075.4,408.9 1079.9,415.2 1087.1,420.6 1091.6,420.6 1092.8,405.3 1094.6,400.8 1096.4,419.7 1108.6,419.7 1115.8,412.5 1119.4,410.7 1123.9,399.9 1125.1,400.8 1127.5,426.9 1129.3,436.7 1131.1,417.9 1136.4,416.1 1139.1,386.5 1140.6,385.6 1142.4,396.4 1144.5,399.9 1148.1,426.9 1149.9,435.8 1168.8,436.7 1170.5,426.9 1174.1,397.3 1176.8,396.4 1182.2,399.9 1186.7,392.8 1189.4,391.0 1191.2,417.9 1193.0,436.7 1195.7,436.7 1196.6,417.9 1198.0,416.1" fill="none" stroke="#ffffff" stroke-width="2" stroke-linejoin="round" />
</g>
<g clip-path="url(#cl3)">
<polyline points="773.4,461.9 779.2,488.3 781.9,451.2 780.6,490.0 788.2,445.8 790.9,455.9 788.7,444.0 795.3,461.3 798.0,467.3 796.7,490.0 802.5,465.5 806.1,491.8 803.9,470.9 810.6,446.1 811.9,461.9 810.2,448.8 816.0,458.3 819.0,450.6 817.4,463.7 825.0,449.7 826.8,449.4 825.4,490.0 831.2,483.5 833.4,472.1 831.7,487.0 839.3,458.6 842.0,487.0 840.7,448.8 848.3,443.1 851.9,450.6 851.5,461.9 857.3,490.0 860.0,447.6 857.8,464.9 863.2,488.8 866.2,448.8 864.0,449.4 870.7,488.3 873.4,483.5 872.1,454.2 877.9,458.3 879.7,472.1 878.4,470.9 884.2,488.3 886.0,478.1 883.8,490.0 891.4,460.1 893.2,452.4 891.0,470.9 896.7,448.8 898.5,488.8 897.2,450.6 903.0,470.9 905.2,447.0 903.0,485.3 909.3,445.2 911.1,488.8 909.8,448.8 915.2,479.9 916.5,443.4 915.2,487.0 921.0,452.4 922.8,488.8 920.9,448.8 927.3,487.0 929.9,447.0 928.1,452.9 933.5,491.8 935.0,440.4 934.0,490.0 941.6,444.0 943.4,448.8 942.1,487.0 949.7,447.0 952.4,487.0 951.1,448.8 956.9,452.9 959.6,490.9 960.0,445.8 966.7,482.9 970.3,445.8 968.1,450.6 976.6,488.8 979.3,448.8 978.0,487.0 985.4,448.8 988.1,488.8 986.8,445.2 993.5,487.0 996.2,452.4 994.9,479.9 1000.7,470.3 1003.3,445.8 1001.1,455.9 1006.9,488.8 1009.6,447.0 1008.0,488.8 1013.2,445.2 1016.8,444.0 1014.6,452.4 1021.3,445.8 1029.4,447.9 1027.2,467.3 1033.5,450.6 1035.7,456.5 1034.3,492.7 1051.8,489.7 1053.6,441.6 1052.3,487.0 1059.0,491.8 1060.8,440.4 1059.5,490.0 1066.2,442.2 1068.3,490.0 1067.2,445.8 1073.3,455.9 1075.1,488.8 1073.8,491.8 1080.5,447.6 1083.2,452.4 1081.9,488.8 1089.5,450.6 1091.3,488.8 1089.1,454.2 1094.9,447.6 1096.3,473.9 1093.6,452.9 1099.4,490.0 1100.8,456.5 1098.1,448.8 1103.8,488.8 1105.3,464.9 1103.4,449.4 1108.9,479.3 1110.1,488.8 1107.9,447.0 1113.2,470.9 1114.3,482.9 1111.5,442.2 1117.0,470.3 1118.2,474.5 1115.6,459.5 1120.9,449.4 1122.7,470.3 1119.9,460.1 1125.4,466.7 1127.2,479.9 1124.4,459.5 1129.9,442.2 1132.6,482.9 1130.4,444.0 1139.7,447.0 1141.5,445.8 1139.3,491.8 1146.9,440.4 1148.7,492.7 1168.0,489.7 1173.8,441.6 1176.5,488.8 1175.2,447.0 1181.0,488.8 1182.8,464.9 1181.5,463.7 1187.3,490.0 1190.0,445.8 1187.8,490.0 1195.4,442.2 1198.1,448.8 1196.4,487.0" fill="none" stroke="#8068f0" stroke-width="2.6" stroke-linejoin="round" />
<polyline points="775.0,489.5 810.9,489.5 821.7,488.0 827.0,489.5 882.7,489.1 891.7,485.4 898.8,485.4 904.2,483.0 911.4,486.3 918.6,486.3 927.5,484.1 932.9,488.0 954.5,489.1 983.0,488.9 1009.0,488.4 1010.8,468.3 1014.4,465.6 1016.2,468.3 1025.2,466.5 1027.0,488.9 1036.8,489.8 1065.6,488.9 1068.2,472.8 1070.9,479.1 1072.7,489.8 1093.4,489.5 1096.1,479.1 1108.6,479.1 1123.0,485.4 1126.6,466.5 1129.3,459.3 1132.0,462.9 1136.4,470.1 1139.1,489.8 1169.6,489.5 1176.8,487.1 1187.6,487.1 1191.2,467.4 1198.0,465.6" fill="none" stroke="#f08818" stroke-width="2.2" stroke-linejoin="round" />
<polyline points="775.0,462.9 776.8,486.3 779.5,452.2 782.2,488.0 785.8,446.8 788.5,453.9 790.3,445.0 792.9,459.3 795.6,468.3 798.3,488.0 800.1,466.5 803.7,489.8 805.5,471.9 808.2,444.1 809.5,462.9 811.8,446.8 813.6,459.3 816.6,448.6 819.0,464.7 822.6,447.7 824.4,450.4 827.0,488.0 828.8,484.5 831.0,470.1 833.3,488.0 836.9,456.6 839.6,488.0 842.3,446.8 845.9,444.1 849.5,448.6 853.1,462.9 854.9,488.0 857.6,448.6 859.4,462.9 860.8,489.8 863.8,446.8 865.6,450.4 868.3,486.3 871.0,484.5 873.7,452.2 875.5,459.3 877.3,470.1 880.0,471.9 881.8,486.3 883.6,479.1 885.4,488.0 889.0,461.1 890.8,450.4 892.6,471.9 894.3,446.8 896.1,489.8 898.8,448.6 900.6,471.9 902.8,445.0 904.6,486.3 906.9,443.2 908.7,489.8 911.4,446.8 912.8,480.9 914.1,441.4 916.8,488.0 918.6,450.4 920.4,489.8 922.5,446.8 924.9,488.0 927.5,445.0 929.7,453.9 931.1,489.8 932.6,441.4 935.6,488.0 939.2,445.0 941.0,446.8 943.7,488.0 947.3,445.0 950.0,488.0 952.7,446.8 954.5,453.9 957.2,488.9 961.6,446.8 964.3,480.9 967.9,446.8 969.7,448.6 974.2,489.8 976.9,446.8 979.6,488.0 983.0,446.8 985.7,489.8 988.4,443.2 991.1,488.0 993.8,450.4 996.5,480.9 998.3,468.3 1000.9,446.8 1002.7,453.9 1004.5,489.8 1007.2,445.0 1009.6,489.8 1010.8,443.2 1014.4,445.0 1016.2,450.4 1018.9,446.8 1027.0,445.9 1028.8,468.3 1031.1,448.6 1033.3,457.5 1035.9,490.7 1049.4,490.7 1051.2,439.6 1053.9,488.0 1056.6,489.8 1058.4,441.4 1061.1,488.0 1063.8,443.2 1065.9,488.0 1068.8,446.8 1070.9,453.9 1072.7,489.8 1075.4,489.8 1078.1,448.6 1080.8,450.4 1083.5,489.8 1087.1,448.6 1088.9,489.8 1090.7,452.2 1092.5,448.6 1093.9,471.9 1095.2,453.9 1097.0,488.0 1098.4,457.5 1099.7,446.8 1101.4,489.8 1102.9,462.9 1105.0,450.4 1106.5,477.3 1107.7,489.8 1109.5,445.0 1110.8,471.9 1111.9,480.9 1113.1,443.2 1114.6,468.3 1115.8,475.5 1117.2,457.5 1118.5,450.4 1120.3,468.3 1121.5,461.1 1123.0,464.7 1124.8,480.9 1126.0,457.5 1127.5,443.2 1130.2,480.9 1132.0,445.0 1137.3,445.0 1139.1,446.8 1140.9,489.8 1144.5,441.4 1146.3,490.7 1169.6,490.7 1171.4,439.6 1174.1,489.8 1176.8,445.0 1178.6,489.8 1180.4,462.9 1183.1,464.7 1184.9,488.0 1187.6,446.8 1189.4,488.0 1193.0,443.2 1195.7,446.8 1198.0,488.0" fill="none" stroke="#18f0ff" stroke-width="2.5" stroke-linejoin="round" />
</g>
<g clip-path="url(#cl4)">
<rect x="775" y="519.2" width="423" height="2.6" fill="#f08018"/>
<polyline points="775.8,511.8 778.5,504.7 780.3,508.2 784.8,493.9 788.4,506.4 791.1,515.4 793.7,502.9 795.5,510.0 799.1,501.1 802.7,499.3 807.2,494.8 809.9,504.7 811.7,501.1 814.4,508.2 818.0,515.4 820.7,510.0 825.2,523.5 829.6,504.7 833.2,499.3 835.9,504.7 837.7,497.5 840.4,502.9 843.1,497.5 845.8,508.2 849.4,517.2 853.0,520.8 855.7,508.2 857.5,513.6 861.9,506.4 865.5,515.4 867.3,523.5 870.0,506.4 872.7,504.7 875.4,511.8 879.0,509.1 883.5,505.5 886.2,499.3 889.8,494.8 892.5,508.2 895.1,501.1 897.8,495.7 900.5,506.4 902.3,499.3 905.0,515.4 908.6,502.9 910.4,499.3 913.1,517.2 914.9,508.2 917.6,502.9 919.4,511.8 922.1,501.1 924.8,510.0 927.5,497.5 930.1,506.4 932.8,517.2 935.5,508.2 939.1,497.5 941.8,510.0 943.6,519.9 946.3,499.3 949.0,508.2 950.8,515.4 953.5,502.9 957.1,497.5 960.7,493.9 963.3,508.2 965.1,515.4 967.8,501.1 970.5,499.3 973.2,515.4 975.9,502.9 979.5,519.9 982.2,502.9 983.8,511.8 986.5,499.3 989.2,510.0 991.9,501.1 994.6,513.6 997.3,502.9 1000.0,497.5 1002.6,513.6 1005.3,501.1 1008.0,511.8 1010.4,518.1 1026.0,519.0 1028.3,529.8 1030.8,515.4 1033.2,530.7 1034.9,519.0 1051.1,519.0 1052.9,528.9 1054.7,515.4 1057.4,504.7 1060.1,501.1 1061.9,519.0 1064.0,501.1 1066.4,511.8 1068.2,506.4 1070.8,527.1 1073.5,504.7 1077.1,501.1 1080.7,517.2 1082.5,524.4 1085.2,509.1 1087.9,517.2 1090.6,508.2 1093.3,517.2 1096.0,528.0 1098.7,520.8 1100.5,527.1 1102.2,511.8 1104.9,522.6 1107.6,510.0 1110.3,524.4 1113.0,513.6 1115.7,524.4 1118.4,511.8 1121.1,519.0 1123.8,508.2 1126.5,510.0 1127.4,518.1 1139.0,519.0 1140.8,530.7 1143.2,517.2 1144.4,519.0 1170.4,519.0 1173.1,527.1 1175.8,506.4 1177.6,517.2 1180.3,508.2 1183.0,519.0 1186.6,504.7 1189.3,515.4 1192.0,506.4 1193.8,518.1 1198.8,519.0" fill="none" stroke="#8068f0" stroke-width="2" stroke-linejoin="round" />
<polyline points="775.0,513.3 777.7,506.2 779.5,509.7 784.0,495.4 787.6,507.9 790.3,516.9 792.9,504.4 794.7,511.5 798.3,502.6 801.9,500.8 806.4,496.3 809.1,506.2 810.9,502.6 813.6,509.7 817.2,516.9 819.9,511.5 824.4,525.0 828.8,506.2 832.4,500.8 835.1,506.2 836.9,499.0 839.6,504.4 842.3,499.0 845.0,509.7 848.6,518.7 852.2,522.3 854.9,509.7 856.7,515.1 861.1,507.9 864.7,516.9 866.5,525.0 869.2,507.9 871.9,506.2 874.6,513.3 878.2,510.6 882.7,507.0 885.4,500.8 889.0,496.3 891.7,509.7 894.3,502.6 897.0,497.2 899.7,507.9 901.5,500.8 904.2,516.9 907.8,504.4 909.6,500.8 912.3,518.7 914.1,509.7 916.8,504.4 918.6,513.3 921.3,502.6 924.0,511.5 926.7,499.0 929.3,507.9 932.0,518.7 934.7,509.7 938.3,499.0 941.0,511.5 942.8,521.4 945.5,500.8 948.2,509.7 950.0,516.9 952.7,504.4 956.3,499.0 959.9,495.4 962.5,509.7 964.3,516.9 967.0,502.6 969.7,500.8 972.4,516.9 975.1,504.4 978.7,521.4 981.4,504.4 983.0,513.3 985.7,500.8 988.4,511.5 991.1,502.6 993.8,515.1 996.5,504.4 999.2,499.0 1001.8,515.1 1004.5,502.6 1007.2,513.3 1009.6,519.6 1025.2,520.5 1027.5,531.3 1030.0,516.9 1032.4,532.2 1034.1,520.5 1050.3,520.5 1052.1,530.4 1053.9,516.9 1056.6,506.2 1059.3,502.6 1061.1,520.5 1063.2,502.6 1065.6,513.3 1067.4,507.9 1070.0,528.6 1072.7,506.2 1076.3,502.6 1079.9,518.7 1081.7,525.9 1084.4,510.6 1087.1,518.7 1089.8,509.7 1092.5,518.7 1095.2,529.5 1097.9,522.3 1099.7,528.6 1101.4,513.3 1104.1,524.1 1106.8,511.5 1109.5,525.9 1112.2,515.1 1114.9,525.9 1117.6,513.3 1120.3,520.5 1123.0,509.7 1125.7,511.5 1126.6,519.6 1138.2,520.5 1140.0,532.2 1142.4,518.7 1143.6,520.5 1169.6,520.5 1172.3,528.6 1175.0,507.9 1176.8,518.7 1179.5,509.7 1182.2,520.5 1185.8,506.2 1188.5,516.9 1191.2,507.9 1193.0,519.6 1198.0,520.5" fill="none" stroke="#18f0ff" stroke-width="2.5" stroke-linejoin="round" />
<g font-family="Liberation Sans, sans-serif" font-size="12.6" fill="#fff">
<text x="751.6" y="541.2" textLength="41.6" lengthAdjust="spacingAndGlyphs">21:21:24</text>
<text x="798.4" y="541.2" textLength="41.6" lengthAdjust="spacingAndGlyphs">21:21:36</text>
<text x="845.1" y="541.2" textLength="41.6" lengthAdjust="spacingAndGlyphs">21:21:48</text>
<text x="891.9" y="541.2" textLength="41.6" lengthAdjust="spacingAndGlyphs">21:22:00</text>
<text x="938.6" y="541.2" textLength="41.6" lengthAdjust="spacingAndGlyphs">21:22:12</text>
<text x="985.4" y="541.2" textLength="41.6" lengthAdjust="spacingAndGlyphs">21:22:24</text>
<text x="1032.1" y="541.2" textLength="41.6" lengthAdjust="spacingAndGlyphs">21:22:36</text>
<text x="1078.9" y="541.2" textLength="41.6" lengthAdjust="spacingAndGlyphs">21:22:48</text>
<text x="1125.6" y="541.2" textLength="41.6" lengthAdjust="spacingAndGlyphs">21:23:00</text>
<text x="1172.4" y="541.2" textLength="41.6" lengthAdjust="spacingAndGlyphs">21:23:12</text>
</g>
</g>
<rect x="775" y="329.2" width="423" height="1.6" fill="#f4f4f4"/>
<rect x="775" y="383.2" width="423" height="1.6" fill="#f4f4f4"/>
<rect x="775" y="437.2" width="423" height="1.6" fill="#f4f4f4"/>
<rect x="775" y="491.2" width="423" height="1.6" fill="#f4f4f4"/>
<rect x="1009" y="277" width="1.4" height="269" fill="#fff"/>
</svg>
</div>
</body></html>
